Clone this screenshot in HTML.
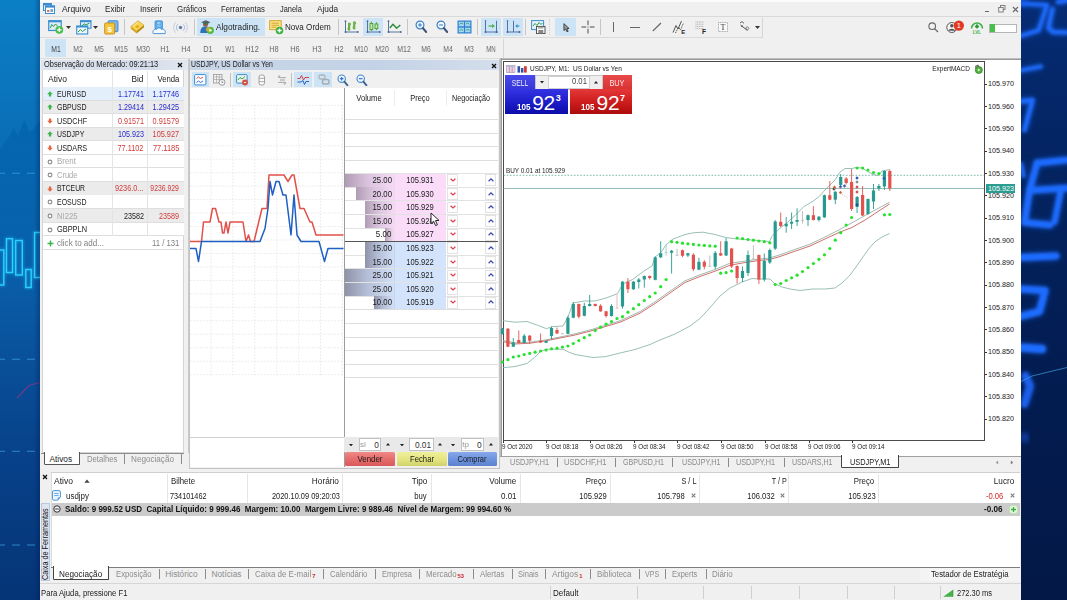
<!DOCTYPE html>
<html><head><meta charset="utf-8"><title>MetaTrader 5</title><style>
html,body{margin:0;padding:0;background:#04275f;}
#pg{position:relative;width:1067px;height:600px;overflow:hidden;font-family:"Liberation Sans",sans-serif;}
.t{position:absolute;white-space:pre;line-height:12px;height:12px;}
.r{position:absolute;box-sizing:border-box;}
</style></head><body><div id="pg">
<svg class="r" style="left:0;top:0" width="1067" height="600" viewBox="0 0 1067 600">
<defs>
<linearGradient id="lg" x1="0" y1="0" x2="0" y2="1">
<stop offset="0" stop-color="#0b7fc6"/><stop offset="0.25" stop-color="#0a6db6"/><stop offset="0.5" stop-color="#0a5aa4"/><stop offset="0.75" stop-color="#07428a"/><stop offset="1" stop-color="#053476"/>
</linearGradient>
<linearGradient id="rg" x1="0" y1="0" x2="0" y2="1">
<stop offset="0" stop-color="#062c74"/><stop offset="0.3" stop-color="#04235f"/><stop offset="0.65" stop-color="#031c50"/><stop offset="1" stop-color="#031846"/>
</linearGradient>
<linearGradient id="mg" x1="0" y1="0" x2="0" y2="1"><stop offset="0" stop-color="#0a5fa9" stop-opacity="0.6"/><stop offset="0.45" stop-color="#0a5fa9" stop-opacity="0.35"/><stop offset="1" stop-color="#0a5fa9" stop-opacity="0"/></linearGradient>
<filter id="b1" x="-20%" y="-20%" width="140%" height="140%"><feGaussianBlur stdDeviation="1.6"/></filter>
<filter id="b2" x="-20%" y="-20%" width="140%" height="140%"><feGaussianBlur stdDeviation="3"/></filter>
<filter id="b0" x="-20%" y="-20%" width="140%" height="140%"><feGaussianBlur stdDeviation="0.5"/></filter>
</defs>
<rect x="0" y="0" width="42" height="600" fill="url(#lg)"/>
<path d="M0,150 L8,138 L14,128 L18,136 L24,120 L30,132 L36,126 L42,118 L42,330 L0,330 Z" fill="url(#mg)" filter="url(#b0)"/>
<g fill="none" stroke="#1fb8f0" stroke-width="3" opacity="0.45" filter="url(#b1)">
<rect x="-3" y="250" width="6.8" height="35"/>
<rect x="6.5" y="238.7" width="6" height="33.8"/>
<rect x="15.7" y="240.5" width="6.6" height="34.5"/>
<rect x="25.8" y="269.5" width="5.4" height="18"/>
<rect x="34.6" y="232.5" width="7" height="45"/>
</g>
<g fill="none" stroke="#2bd0ff" stroke-width="1.4" filter="url(#b0)">
<rect x="-3" y="250" width="6.8" height="35"/>
<rect x="6.5" y="238.7" width="6" height="33.8"/>
<rect x="15.7" y="240.5" width="6.6" height="34.5"/>
<rect x="25.8" y="269.5" width="5.4" height="18"/>
<rect x="34.6" y="232.5" width="7" height="45"/>
</g>
<g stroke="#3c9fe0" stroke-width="1.1" stroke-dasharray="8,7" opacity="0.75">
<line x1="-3" y1="173.3" x2="36" y2="173.3"/><line x1="-3" y1="359.2" x2="36" y2="359.2"/><line x1="-3" y1="451.3" x2="36" y2="451.3"/><line x1="-3" y1="545" x2="36" y2="545"/>
</g>
<path d="M17,398 L29,385.5 L34,384 L40,382.5" fill="none" stroke="#7a3a8a" stroke-width="1.2" opacity="0.9"/>
<linearGradient id="sh" x1="0" y1="0" x2="1" y2="0"><stop offset="0" stop-color="#001040" stop-opacity="0"/><stop offset="1" stop-color="#001040" stop-opacity="0.28"/></linearGradient>
<rect x="34" y="0" width="6" height="600" fill="url(#sh)"/>
<rect x="1020" y="0" width="47" height="600" fill="url(#rg)"/>
<g filter="url(#b2)" opacity="0.55"><g fill="none" stroke="#1f6cff" stroke-linecap="round" stroke-linejoin="round">
<path d="M1020,3.5 L1047,5 L1038.5,30.5 L1020,36" stroke-width="4.2"/>
<path d="M1058,2 L1067,0.5 M1052.5,9 L1048.5,28 L1053,32 L1067,32.5" stroke-width="4.5"/>
<path d="M1020,70.5 L1041,66.5" stroke-width="4.2"/>
<path d="M1020,101.5 L1032.5,100.2 L1024.5,130" stroke-width="4.8"/>
<path d="M1037,163 L1067,160" stroke-width="6.5"/>
<path d="M1037,163 L1029.5,190.5 L1067,188" stroke-width="6.5"/>
<path d="M1029.5,190.5 L1024.5,222.5 L1050,225" stroke-width="6.5"/>
<path d="M1061,190 L1054.5,222" stroke-width="6"/>
<path d="M1021,164 L1023.5,176" stroke-width="4"/>
<path d="M1020,257.5 L1056,256" stroke-width="7"/>
<path d="M1020,289 L1045,290.5 L1039.5,311.5 L1020,316.5" stroke-width="7"/>
<path d="M1020,347.5 L1042,349" stroke-width="8"/>
<path d="M1025.5,376 L1030,386 L1024.5,404" stroke-width="7.5" stroke="#1e5fea"/>
</g></g>
<g filter="url(#b1)"><g fill="none" stroke="#1f6cff" stroke-linecap="round" stroke-linejoin="round">
<path d="M1020,3.5 L1047,5 L1038.5,30.5 L1020,36" stroke-width="4.2"/>
<path d="M1058,2 L1067,0.5 M1052.5,9 L1048.5,28 L1053,32 L1067,32.5" stroke-width="4.5"/>
<path d="M1020,70.5 L1041,66.5" stroke-width="4.2"/>
<path d="M1020,101.5 L1032.5,100.2 L1024.5,130" stroke-width="4.8"/>
<path d="M1037,163 L1067,160" stroke-width="6.5"/>
<path d="M1037,163 L1029.5,190.5 L1067,188" stroke-width="6.5"/>
<path d="M1029.5,190.5 L1024.5,222.5 L1050,225" stroke-width="6.5"/>
<path d="M1061,190 L1054.5,222" stroke-width="6"/>
<path d="M1021,164 L1023.5,176" stroke-width="4"/>
<path d="M1020,257.5 L1056,256" stroke-width="7"/>
<path d="M1020,289 L1045,290.5 L1039.5,311.5 L1020,316.5" stroke-width="7"/>
<path d="M1020,347.5 L1042,349" stroke-width="8"/>
<path d="M1025.5,376 L1030,386 L1024.5,404" stroke-width="7.5" stroke="#1e5fea"/>
</g>
</g>
<g fill="#1c5cf0" filter="url(#b2)"><circle cx="1023" cy="1" r="4"/><circle cx="1024.5" cy="437.5" r="3.5"/></g>
<path d="M1021,381.5 L1032,376 L1067,367.5" fill="none" stroke="#3fa6e6" stroke-width="0.8" opacity="0.85"/>
</svg>
<div class="r" style="left:39.7px;top:0.0px;width:981.8px;height:600.0px;background:#f0f0f0;"></div>
<div class="r" style="left:39.7px;top:0.0px;width:981.8px;height:1.5px;background:#fbfbfb;"></div>
<svg class="r" style="left:43.0px;top:3.0px;" width="12" height="11" viewBox="0 0 12 11"><rect x="0.5" y="0.5" width="8" height="7" fill="#e8f2fb" stroke="#3d8ad0" stroke-width="1"/><rect x="0.5" y="0.5" width="8" height="1.8" fill="#3d8ad0"/><rect x="2.5" y="2.8" width="9" height="7.7" fill="#fff" stroke="#3d8ad0" stroke-width="1"/><rect x="2.5" y="2.8" width="9" height="1.8" fill="#3d8ad0"/><rect x="4" y="7" width="2.5" height="2" fill="#e07a50"/><rect x="7.5" y="6" width="2.5" height="3" fill="#6aa8de"/></svg>
<div class="t" style="top:3.0px;font-size:8.6px;color:#1e1e1e;transform:scaleX(0.981);transform-origin:0 50%;left:61.8px;">Arquivo</div>
<div class="t" style="top:3.0px;font-size:8.6px;color:#1e1e1e;transform:scaleX(0.939);transform-origin:0 50%;left:105.4px;">Exibir</div>
<div class="t" style="top:3.0px;font-size:8.6px;color:#1e1e1e;transform:scaleX(0.929);transform-origin:0 50%;left:140.3px;">Inserir</div>
<div class="t" style="top:3.0px;font-size:8.6px;color:#1e1e1e;transform:scaleX(0.918);transform-origin:0 50%;left:177.0px;">Gráficos</div>
<div class="t" style="top:3.0px;font-size:8.6px;color:#1e1e1e;transform:scaleX(0.899);transform-origin:0 50%;left:221.4px;">Ferramentas</div>
<div class="t" style="top:3.0px;font-size:8.6px;color:#1e1e1e;transform:scaleX(0.860);transform-origin:0 50%;left:280.4px;">Janela</div>
<div class="t" style="top:3.0px;font-size:8.6px;color:#1e1e1e;transform:scaleX(0.964);transform-origin:0 50%;left:317.3px;">Ajuda</div>
<div class="r" style="left:984.5px;top:10.5px;width:4.0px;height:1.0px;background:#666;"></div>
<svg class="r" style="left:997.5px;top:5.0px;" width="8" height="8" viewBox="0 0 8 8"><rect x="2.5" y="0.5" width="4.5" height="4" fill="none" stroke="#777" stroke-width="0.9"/><rect x="0.7" y="2.5" width="4.5" height="4.5" fill="#f0f0f0" stroke="#777" stroke-width="0.9"/></svg>
<svg class="r" style="left:1011.5px;top:5.5px;" width="7" height="7" viewBox="0 0 7 7"><path d="M1,1 L6,6 M6,1 L1,6" stroke="#666" stroke-width="1.1" fill="none"/></svg>
<div class="r" style="left:39.7px;top:16.3px;width:981.8px;height:0.8px;background:#d9d9d9;"></div>
<svg class="r" style="left:47.5px;top:19.5px;" width="18" height="15" viewBox="0 0 18 15"><rect x="0.7" y="0.7" width="12.5" height="9.8" fill="#dcecfa" stroke="#3a8fd0" stroke-width="1.2"/><rect x="0.7" y="0.7" width="12.5" height="1.6" fill="#3a8fd0"/><path d="M2.2,8 L3.8,4.5 L5.5,6.5 L7.5,4 L9.5,6" stroke="#2d9a45" stroke-width="1" fill="none"/><circle cx="11.3" cy="9.8" r="3.9" fill="#48bf4c"/><path d="M11.3,7.6 V12 M9.1,9.8 H13.5" stroke="#fff" stroke-width="1.3"/></svg>
<svg class="r" style="left:65.5px;top:26.0px;" width="5" height="3" viewBox="0 0 5 3"><path d="M0,0 L5,0 L2.5,3 Z" fill="#333"/></svg>
<svg class="r" style="left:75.5px;top:19.5px;" width="16" height="15" viewBox="0 0 16 15"><rect x="4.5" y="0.7" width="10.5" height="7.5" fill="#dcecfa" stroke="#3a8fd0" stroke-width="1.1"/><rect x="4.5" y="0.7" width="10.5" height="1.5" fill="#3a8fd0"/><rect x="0.7" y="6" width="11" height="8" fill="#eef6fd" stroke="#3a8fd0" stroke-width="1.1"/><rect x="0.7" y="6" width="11" height="1.5" fill="#3a8fd0"/><path d="M6,6 L8,3.8 L10,5 L13.5,3" stroke="#2d9a45" stroke-width="1" fill="none"/><path d="M2,12 L4.5,9.6 L6.5,11.5 L10,9" stroke="#2d9a45" stroke-width="1" fill="none"/></svg>
<svg class="r" style="left:93.0px;top:26.0px;" width="5" height="3" viewBox="0 0 5 3"><path d="M0,0 L5,0 L2.5,3 Z" fill="#333"/></svg>
<svg class="r" style="left:103.5px;top:19.5px;" width="15" height="15" viewBox="0 0 15 15"><rect x="4" y="0.7" width="10" height="11" rx="1" fill="#7db7ea" stroke="#3f88cc" stroke-width="0.9"/><rect x="0.7" y="3" width="10" height="11" rx="1" fill="#f6c63c" stroke="#c58a10" stroke-width="0.9"/><text x="5.7" y="11.7" font-size="8" font-family="Liberation Sans, sans-serif" font-weight="bold" fill="#fff" text-anchor="middle">$</text></svg>
<div class="r" style="left:123.5px;top:19.0px;width:1.0px;height:16.0px;background:#c6c6c6;"></div>
<svg class="r" style="left:129.5px;top:19.5px;" width="15" height="14" viewBox="0 0 15 14"><path d="M0.8,6.6 L8,0.8 L14,5.2 L6.6,11.3 Z" fill="#f7d352" stroke="#c8961c" stroke-width="0.6"/><path d="M0.8,6.6 L6.6,11.3 L6.6,13.4 L0.8,8.7 Z" fill="#d9a520"/><path d="M6.6,11.3 L14,5.2 L14,7.3 L6.6,13.4 Z" fill="#b8860e"/><path d="M5.2,6.8 L7.5,5 L9.3,6.4 L7.2,8.2 Z" fill="#e0a818"/><path d="M3,6.2 L8,2.3" stroke="#fdf0b0" stroke-width="0.9"/></svg>
<svg class="r" style="left:151.5px;top:19.5px;" width="15" height="15" viewBox="0 0 15 15"><rect x="3" y="0.8" width="7.5" height="8.5" rx="1" fill="#5cadea" stroke="#3f90d6" stroke-width="0.8"/><path d="M5,3 H8.5 M6.8,1.8 V4.6 M5,6 H8.5" stroke="#bfe0fa" stroke-width="0.8"/><path d="M1.2,13.6 C0,10.5 2.5,8.6 4.4,9.5 C5.2,7.4 8.6,7.4 9.4,9.4 C11.8,8.4 14,10.4 13.2,13.6 Z" fill="#f4f9fe" stroke="#4a98dc" stroke-width="1"/></svg>
<svg class="r" style="left:172.5px;top:20.5px;" width="15" height="13" viewBox="0 0 15 13"><circle cx="7.5" cy="6.5" r="1.7" fill="#5f7fa8"/><path d="M4.8,3.3 A4.5,4.5 0 0 0 4.8,9.7 M10.2,3.3 A4.5,4.5 0 0 1 10.2,9.7" stroke="#9fb4d0" stroke-width="0.9" fill="none"/><path d="M2.8,1.3 A7.3,7.3 0 0 0 2.8,11.7 M12.2,1.3 A7.3,7.3 0 0 1 12.2,11.7" stroke="#bccadc" stroke-width="0.9" fill="none"/></svg>
<div class="r" style="left:193.5px;top:19.0px;width:1.0px;height:16.0px;background:#c6c6c6;"></div>
<div class="r" style="left:197.0px;top:18.3px;width:67.8px;height:17.6px;background:#cde4f7;"></div>
<svg class="r" style="left:199.5px;top:20.0px;" width="14" height="14" viewBox="0 0 14 14"><circle cx="5.5" cy="4.2" r="2.5" fill="#a8584a"/><path d="M0.3,13 C0.3,8 2.5,6.6 5.5,6.6 C8.5,6.6 10.5,8 10.5,13 Z" fill="#2c72c0"/><path d="M1,2.2 L5.8,0.2 L10.6,2.2 L5.8,4 Z" fill="#55606a"/><path d="M3,3 L8.6,3 L8.2,4.6 L3.4,4.6 Z" fill="#3c7a4a"/><circle cx="10.3" cy="10.3" r="3.6" fill="#58b83a"/><circle cx="8" cy="9.3" r="2.2" fill="#d8b02a" opacity="0.8"/><path d="M9.4,8.4 L12.4,10.3 L9.4,12.2 Z" fill="#eaffd8"/></svg>
<div class="t" style="top:21.0px;font-size:8.6px;color:#1e1e1e;transform:scaleX(0.963);transform-origin:0 50%;left:216.0px;">Algotrading.</div>
<svg class="r" style="left:268.5px;top:19.5px;" width="15" height="15" viewBox="0 0 15 15"><rect x="0.7" y="0.7" width="11.5" height="9" fill="#fbe28a" stroke="#d0a020" stroke-width="0.9"/><path d="M2.5,3.2 H10 M2.5,5.3 H10 M2.5,7.3 H7" stroke="#c99a18" stroke-width="0.8"/><circle cx="10.5" cy="10.5" r="3.8" fill="#3cb043"/><path d="M10.5,8.4 V12.6 M8.4,10.5 H12.6" stroke="#fff" stroke-width="1.3"/></svg>
<div class="t" style="top:21.0px;font-size:8.6px;color:#1e1e1e;transform:scaleX(0.940);transform-origin:0 50%;left:284.8px;">Nova Ordem</div>
<div class="r" style="left:337.5px;top:19.0px;width:1.0px;height:16.0px;background:#c6c6c6;"></div>
<svg class="r" style="left:343.5px;top:20.0px;" width="15" height="14" viewBox="0 0 15 14"><path d="M1.5,1 V12 M1.5,12 H14" stroke="#46689a" stroke-width="0.9" fill="none"/><circle cx="1.5" cy="1.2" r="0.9" fill="#46689a"/><circle cx="1.5" cy="12" r="1" fill="#46689a"/><circle cx="13.8" cy="12" r="0.9" fill="#46689a"/><path d="M5.2,2.8 V10.6 M3.7,8.8 H5.2 M5.2,4.2 H6.7 M10.3,1.6 V9.2 M8.8,7.6 H10.3 M10.3,3 H11.8" stroke="#3f8f22" stroke-width="1.9" fill="none"/><path d="M5.2,2.8 V10.6 M3.7,8.8 H5.2 M5.2,4.2 H6.7 M10.3,1.6 V9.2 M8.8,7.6 H10.3 M10.3,3 H11.8" stroke="#7ed048" stroke-width="0.8" fill="none"/></svg>
<div class="r" style="left:363.3px;top:18.3px;width:19.6px;height:17.6px;background:#cde4f7;"></div>
<svg class="r" style="left:365.5px;top:20.0px;" width="15" height="14" viewBox="0 0 15 14"><path d="M1.5,1 V12 M1.5,12 H14" stroke="#46689a" stroke-width="0.9" fill="none"/><circle cx="1.5" cy="1.2" r="0.9" fill="#46689a"/><circle cx="1.5" cy="12" r="1" fill="#46689a"/><circle cx="13.8" cy="12" r="0.9" fill="#46689a"/><rect x="4" y="3.5" width="2.8" height="6.2" fill="#c6e8a8" stroke="#4a9e2a" stroke-width="0.9"/><path d="M5.4,1.6 V3.5 M5.4,9.7 V11" stroke="#4a9e2a" stroke-width="0.9"/><rect x="9" y="4" width="2.8" height="4.6" fill="#c6e8a8" stroke="#4a9e2a" stroke-width="0.9"/><path d="M10.4,2.2 V4 M10.4,8.6 V10.2" stroke="#4a9e2a" stroke-width="0.9"/></svg>
<svg class="r" style="left:387.0px;top:20.0px;" width="15" height="14" viewBox="0 0 15 14"><path d="M1.5,1 V12 M1.5,12 H14" stroke="#46689a" stroke-width="0.9" fill="none"/><circle cx="1.5" cy="1.2" r="0.9" fill="#46689a"/><circle cx="1.5" cy="12" r="1" fill="#46689a"/><circle cx="13.8" cy="12" r="0.9" fill="#46689a"/><path d="M2.8,8 L6,4.2 L9.6,8.2 L13.3,5" stroke="#2e8a3a" stroke-width="1.4" fill="none" stroke-linejoin="round"/></svg>
<div class="r" style="left:407.3px;top:19.0px;width:1.0px;height:16.0px;background:#c6c6c6;"></div>
<svg class="r" style="left:414.5px;top:19.6px;" width="13" height="14" viewBox="0 0 13 14"><circle cx="5" cy="5" r="3.9" fill="#f3f9ff" stroke="#3f7fc4" stroke-width="1.2"/><path d="M7.8,8 L11.2,12" stroke="#3f5578" stroke-width="2" stroke-linecap="round"/><path d="M3,5 H7" stroke="#3f88cc" stroke-width="1.1"/><path d="M5,3 V7" stroke="#3f88cc" stroke-width="1.1"/></svg>
<svg class="r" style="left:436.0px;top:19.6px;" width="13" height="14" viewBox="0 0 13 14"><circle cx="5" cy="5" r="3.9" fill="#f3f9ff" stroke="#3f7fc4" stroke-width="1.2"/><path d="M7.8,8 L11.2,12" stroke="#3f5578" stroke-width="2" stroke-linecap="round"/><path d="M3,5 H7" stroke="#3f88cc" stroke-width="1.1"/></svg>
<svg class="r" style="left:457.0px;top:20.0px;" width="15" height="14" viewBox="0 0 15 14"><rect x="0.5" y="0.5" width="14" height="13" fill="#2f7fd0"/><rect x="1.7" y="1.7" width="5.2" height="4.6" fill="#a6d6f6"/><rect x="8.1" y="1.7" width="5.2" height="4.6" fill="#a6d6f6"/><rect x="1.7" y="7.7" width="5.2" height="4.6" fill="#a6d6f6"/><rect x="8.1" y="7.7" width="5.2" height="4.6" fill="#a6d6f6"/><path d="M2.5,4.5 L4,3 L6,4 M9,4 L10.5,3 L12.5,4.3 M2.5,10.5 L4.5,9.3 L6,10.5 M9,10 L11,9.5 L12.5,10.5" stroke="#2d9a45" stroke-width="0.8" fill="none"/></svg>
<div class="r" style="left:477.3px;top:19.0px;width:1.0px;height:16.0px;background:#c6c6c6;"></div>
<div class="r" style="left:480.8px;top:18.3px;width:20.4px;height:17.6px;background:#cde4f7;"></div>
<svg class="r" style="left:483.5px;top:20.0px;" width="15" height="14" viewBox="0 0 15 14"><path d="M1.5,0.8 V12 M12.5,0.8 V12 M1.5,12 H14" stroke="#46689a" stroke-width="0.9" fill="none"/><path d="M4.5,6 H10" stroke="#4cb04c" stroke-width="1.2"/><path d="M8.2,3.7 L10.8,6 L8.2,8.3 Z" fill="#4cb04c"/><circle cx="1.5" cy="12" r="1" fill="#46689a"/><circle cx="12.5" cy="12" r="1" fill="#46689a"/><circle cx="1.5" cy="1" r="0.8" fill="#46689a"/></svg>
<div class="r" style="left:502.6px;top:18.3px;width:20.8px;height:17.6px;background:#cde4f7;"></div>
<svg class="r" style="left:505.5px;top:20.0px;" width="15" height="14" viewBox="0 0 15 14"><path d="M1.5,0.8 V12 M7.5,0.8 V12 M1.5,12 H14" stroke="#46689a" stroke-width="0.9" fill="none"/><path d="M10,6 H13.5" stroke="#3a8fd0" stroke-width="1.1"/><path d="M11.5,3.9 L9.3,6 L11.5,8.1 Z" fill="#3a8fd0"/><circle cx="1.5" cy="12" r="1" fill="#46689a"/><circle cx="13.5" cy="12" r="1" fill="#46689a"/><circle cx="1.5" cy="1" r="0.8" fill="#46689a"/></svg>
<div class="r" style="left:524.6px;top:19.0px;width:1.0px;height:16.0px;background:#c6c6c6;"></div>
<svg class="r" style="left:531.0px;top:20.0px;" width="15" height="14" viewBox="0 0 15 14"><rect x="0.6" y="0.6" width="12" height="9" fill="#e6f2fc" stroke="#3a8fd0" stroke-width="1"/><path d="M2,6 L4,3.5 L6,5.5 L8,2.5 L10,4.5 L11.5,3" stroke="#2d9a45" stroke-width="1" fill="none"/><rect x="5.5" y="6.5" width="8.5" height="7" fill="#fff" stroke="#555" stroke-width="1"/><rect x="7.3" y="10" width="5" height="3.5" fill="#888"/><rect x="7" y="6.8" width="5.5" height="1.8" fill="#aaa"/></svg>
<div class="r" style="left:549.3px;top:19.0px;width:1.0px;height:16.0px;background:transparent;border-left:1px dotted #d2d2d2;"></div>
<div class="r" style="left:555.0px;top:18.3px;width:21.4px;height:17.6px;background:#cde4f7;"></div>
<svg class="r" style="left:563.0px;top:22.5px;" width="7" height="9.5" viewBox="0 0 8 11"><path d="M1,0.7 L1,8.8 L3,7 L4.6,10.3 L5.9,9.7 L4.4,6.5 L7,6.3 Z" fill="#9a9a9a" stroke="#2a2a2a" stroke-width="0.9"/></svg>
<svg class="r" style="left:580.5px;top:19.5px;" width="14" height="14" viewBox="0 0 14 14"><path d="M7,0.5 V5.2 M7,8.8 V13.5 M0.5,7 H5.2 M8.8,7 H13.5" stroke="#4a4a4a" stroke-width="1"/><circle cx="7" cy="7" r="0.6" fill="#4a4a4a"/></svg>
<div class="r" style="left:600.2px;top:19.0px;width:1.0px;height:16.0px;background:#c6c6c6;"></div>
<div class="r" style="left:612.6px;top:22.0px;width:1.0px;height:10.0px;background:#666;"></div>
<div class="r" style="left:630.0px;top:26.6px;width:9.5px;height:1.0px;background:#666;"></div>
<svg class="r" style="left:651.5px;top:22.0px;" width="10" height="10" viewBox="0 0 10 10"><path d="M0.8,9 L9,1" stroke="#666" stroke-width="1.1"/></svg>
<svg class="r" style="left:671.5px;top:20.0px;" width="15" height="14" viewBox="0 0 15 14"><path d="M1,12.5 L4,5.5 L6,9 L9.5,1" stroke="#555" stroke-width="1" fill="none"/><path d="M3.5,13 L6.5,7 L8.5,10 L11.5,3" stroke="#555" stroke-width="1" fill="none" stroke-dasharray="1.2,0.8"/><text x="9.3" y="13.6" font-size="6" font-weight="bold" font-family="Liberation Sans, sans-serif" fill="#222">E</text></svg>
<svg class="r" style="left:695.0px;top:20.5px;" width="13" height="14" viewBox="0 0 13 14"><path d="M0.5,1 H8.5 M0.5,3.2 H8.5 M0.5,5.4 H8.5 M0.5,7.6 H8.5" stroke="#999" stroke-width="0.8" stroke-dasharray="1,0.7"/><text x="7" y="13" font-size="6.5" font-weight="bold" font-family="Liberation Sans, sans-serif" fill="#222">F</text></svg>
<svg class="r" style="left:716.5px;top:21.0px;" width="12" height="12" viewBox="0 0 12 12"><rect x="1.5" y="1.5" width="9" height="9" fill="#fafafa" stroke="#888" stroke-width="0.7" stroke-dasharray="1,0.6"/><text x="6" y="9.3" font-size="8" font-family="Liberation Serif, serif" fill="#333" text-anchor="middle">T</text></svg>
<svg class="r" style="left:738.5px;top:21.0px;" width="11" height="11" viewBox="0 0 11 11"><path d="M1,2 L3,0.6 L5,2.3" stroke="#555" stroke-width="0.9" fill="none"/><path d="M1.5,4 L8.5,9.5" stroke="#555" stroke-width="1"/><path d="M6.5,7 L8.3,5.6 L10,7.3 L8.3,9 Z" stroke="#555" stroke-width="0.8" fill="none"/><path d="M2,6 L4,4.4" stroke="#555" stroke-width="0.8"/></svg>
<svg class="r" style="left:754.5px;top:26.0px;" width="5" height="3" viewBox="0 0 5 3"><path d="M0,0 L5,0 L2.5,3 Z" fill="#333"/></svg>
<div class="r" style="left:762.3px;top:17.5px;width:1.0px;height:19.5px;background:#d6d6d6;"></div>
<div class="r" style="left:39.7px;top:37.0px;width:723.0px;height:0.8px;background:#dadada;"></div>
<svg class="r" style="left:927.5px;top:21.5px;" width="11" height="11" viewBox="0 0 11 11"><circle cx="4.2" cy="4.2" r="3.3" fill="none" stroke="#666" stroke-width="1.1"/><path d="M6.6,6.6 L10,10" stroke="#666" stroke-width="1.3"/></svg>
<svg class="r" style="left:945.5px;top:20.0px;" width="19" height="14" viewBox="0 0 19 14"><circle cx="5.8" cy="7.5" r="5" fill="#f4f4f4" stroke="#555" stroke-width="1"/><circle cx="5.8" cy="5.8" r="1.7" fill="#555"/><path d="M2.3,10.8 C3,8 8.6,8 9.3,10.8" fill="#555"/><circle cx="12.8" cy="5.6" r="5.2" fill="#e03a22"/><text x="12.8" y="8.3" font-size="7.5" font-family="Liberation Sans, sans-serif" fill="#fff" text-anchor="middle">1</text></svg>
<svg class="r" style="left:969.5px;top:20.0px;" width="14" height="14" viewBox="0 0 14 14"><path d="M1.5,8.5 A5.5,5.5 0 0 1 12.5,8.5" fill="none" stroke="#3cb043" stroke-width="1.6"/><path d="M7,3.8 L9.3,6.8 L7,8.8 L4.7,6.8 Z" fill="#2f9a3a"/><text x="7" y="13.6" font-size="4.6" font-weight="bold" font-family="Liberation Sans, sans-serif" fill="#3cb043" text-anchor="middle">LVL</text></svg>
<div class="r" style="left:988.8px;top:23.5px;width:28.5px;height:9.0px;background:#fdfdfd;border:1px solid #b5b5b5;"></div>
<div class="r" style="left:989.6px;top:24.3px;width:5.0px;height:7.4px;background:#48c04a;"></div>
<div class="r" style="left:45.4px;top:39.0px;width:20.8px;height:17.6px;background:#cde4f7;"></div>
<div class="t" style="top:42.5px;font-size:8.5px;color:#444;transform:scaleX(0.805);transform-origin:50% 50%;left:-44.2px;width:200px;text-align:center;">M1</div>
<div class="t" style="top:42.5px;font-size:8.5px;color:#6a6a6a;transform:scaleX(0.805);transform-origin:50% 50%;left:-22.4px;width:200px;text-align:center;">M2</div>
<div class="t" style="top:42.5px;font-size:8.5px;color:#6a6a6a;transform:scaleX(0.805);transform-origin:50% 50%;left:-0.7px;width:200px;text-align:center;">M5</div>
<div class="t" style="top:42.5px;font-size:8.5px;color:#6a6a6a;transform:scaleX(0.817);transform-origin:50% 50%;left:21.1px;width:200px;text-align:center;">M15</div>
<div class="t" style="top:42.5px;font-size:8.5px;color:#6a6a6a;transform:scaleX(0.817);transform-origin:50% 50%;left:42.9px;width:200px;text-align:center;">M30</div>
<div class="t" style="top:42.5px;font-size:8.5px;color:#6a6a6a;transform:scaleX(0.874);transform-origin:50% 50%;left:64.6px;width:200px;text-align:center;">H1</div>
<div class="t" style="top:42.5px;font-size:8.5px;color:#6a6a6a;transform:scaleX(0.874);transform-origin:50% 50%;left:86.4px;width:200px;text-align:center;">H4</div>
<div class="t" style="top:42.5px;font-size:8.5px;color:#6a6a6a;transform:scaleX(0.874);transform-origin:50% 50%;left:108.2px;width:200px;text-align:center;">D1</div>
<div class="t" style="top:42.5px;font-size:8.5px;color:#6a6a6a;transform:scaleX(0.745);transform-origin:50% 50%;left:130.0px;width:200px;text-align:center;">W1</div>
<div class="t" style="top:42.5px;font-size:8.5px;color:#6a6a6a;transform:scaleX(0.866);transform-origin:50% 50%;left:151.7px;width:200px;text-align:center;">H12</div>
<div class="t" style="top:42.5px;font-size:8.5px;color:#6a6a6a;transform:scaleX(0.874);transform-origin:50% 50%;left:173.5px;width:200px;text-align:center;">H8</div>
<div class="t" style="top:42.5px;font-size:8.5px;color:#6a6a6a;transform:scaleX(0.874);transform-origin:50% 50%;left:195.3px;width:200px;text-align:center;">H6</div>
<div class="t" style="top:42.5px;font-size:8.5px;color:#6a6a6a;transform:scaleX(0.874);transform-origin:50% 50%;left:217.0px;width:200px;text-align:center;">H3</div>
<div class="t" style="top:42.5px;font-size:8.5px;color:#6a6a6a;transform:scaleX(0.874);transform-origin:50% 50%;left:238.8px;width:200px;text-align:center;">H2</div>
<div class="t" style="top:42.5px;font-size:8.5px;color:#6a6a6a;transform:scaleX(0.817);transform-origin:50% 50%;left:260.6px;width:200px;text-align:center;">M10</div>
<div class="t" style="top:42.5px;font-size:8.5px;color:#6a6a6a;transform:scaleX(0.817);transform-origin:50% 50%;left:282.4px;width:200px;text-align:center;">M20</div>
<div class="t" style="top:42.5px;font-size:8.5px;color:#6a6a6a;transform:scaleX(0.817);transform-origin:50% 50%;left:304.1px;width:200px;text-align:center;">M12</div>
<div class="t" style="top:42.5px;font-size:8.5px;color:#6a6a6a;transform:scaleX(0.805);transform-origin:50% 50%;left:325.9px;width:200px;text-align:center;">M6</div>
<div class="t" style="top:42.5px;font-size:8.5px;color:#6a6a6a;transform:scaleX(0.805);transform-origin:50% 50%;left:347.7px;width:200px;text-align:center;">M4</div>
<div class="t" style="top:42.5px;font-size:8.5px;color:#6a6a6a;transform:scaleX(0.805);transform-origin:50% 50%;left:369.4px;width:200px;text-align:center;">M3</div>
<div class="t" style="top:42.5px;font-size:8.5px;color:#6a6a6a;transform:scaleX(0.719);transform-origin:50% 50%;left:391.2px;width:200px;text-align:center;">MN</div>
<div class="r" style="left:502.8px;top:38.5px;width:1.0px;height:19.0px;background:#d6d6d6;"></div>
<div class="r" style="left:39.7px;top:57.6px;width:463.0px;height:0.8px;background:#dcdcdc;"></div>
<div class="r" style="left:40.5px;top:58.5px;width:148.5px;height:410.5px;background:#f0f0f0;"></div>
<div class="r" style="left:41.0px;top:59.6px;width:147.0px;height:10.4px;background:linear-gradient(90deg,#dfe5ee 0%,#d3dcea 70%,#e3e8f0 100%);"></div>
<div class="t" style="top:59.0px;font-size:8.2px;color:#1a1a1a;transform:scaleX(0.906);transform-origin:0 50%;left:43.8px;">Observação do Mercado: 09:21:13</div>
<svg class="r" style="left:176.5px;top:61.8px;" width="6" height="6" viewBox="0 0 6 6"><path d="M1,1 L5,5 M5,1 L1,5" stroke="#111" stroke-width="1.3"/></svg>
<div class="r" style="left:42.3px;top:70.3px;width:142.0px;height:382.5px;background:#fff;border:1px solid #d4d4d4;border-top:none;"></div>
<div class="r" style="left:184.3px;top:70.3px;width:4.2px;height:382.5px;background:#f0f0f0;"></div>
<div class="r" style="left:188.3px;top:58.5px;width:0.8px;height:410.5px;background:#c9c9c9;"></div>
<div class="t" style="top:73.0px;font-size:8.6px;color:#1a1a1a;transform:scaleX(0.994);transform-origin:0 50%;left:47.5px;">Ativo</div>
<div class="t" style="top:73.0px;font-size:8.6px;color:#1a1a1a;transform:scaleX(0.965);transform-origin:100% 50%;right:923.7px;">Bid</div>
<div class="t" style="top:73.0px;font-size:8.6px;color:#1a1a1a;transform:scaleX(0.902);transform-origin:100% 50%;right:888.0px;">Venda</div>
<div class="r" style="left:43.0px;top:86.6px;width:141.0px;height:0.7px;background:#e2e2e2;"></div>
<div class="r" style="left:43.0px;top:87.0px;width:141.0px;height:13.6px;background:#e3effb;"></div>
<div class="r" style="left:43.0px;top:99.6px;width:141.0px;height:0.9px;background:#dedede;"></div>
<svg class="r" style="left:47.0px;top:90.7px;" width="6" height="6" viewBox="0 0 7 7"><path d="M3.5,0.3 L6.7,3.7 L4.8,3.7 L4.8,6.5 L2.2,6.5 L2.2,3.7 L0.3,3.7 Z" fill="#3bb54a"/></svg>
<div class="t" style="top:87.6px;font-size:8.6px;color:#1a1a1a;transform:scaleX(0.804);transform-origin:0 50%;left:57.0px;">EURUSD</div>
<div class="t" style="top:87.6px;font-size:8.6px;color:#2a2acc;transform:scaleX(0.836);transform-origin:100% 50%;right:923.4px;">1.17741</div>
<div class="t" style="top:87.6px;font-size:8.6px;color:#2a2acc;transform:scaleX(0.853);transform-origin:100% 50%;right:887.8px;">1.17746</div>
<div class="r" style="left:43.0px;top:100.5px;width:141.0px;height:13.6px;background:#ebebeb;"></div>
<div class="r" style="left:43.0px;top:113.2px;width:141.0px;height:0.9px;background:#dedede;"></div>
<svg class="r" style="left:47.0px;top:104.2px;" width="6" height="6" viewBox="0 0 7 7"><path d="M3.5,0.3 L6.7,3.7 L4.8,3.7 L4.8,6.5 L2.2,6.5 L2.2,3.7 L0.3,3.7 Z" fill="#3bb54a"/></svg>
<div class="t" style="top:101.1px;font-size:8.6px;color:#1a1a1a;transform:scaleX(0.812);transform-origin:0 50%;left:57.0px;">GBPUSD</div>
<div class="t" style="top:101.1px;font-size:8.6px;color:#2a2acc;transform:scaleX(0.836);transform-origin:100% 50%;right:923.4px;">1.29414</div>
<div class="t" style="top:101.1px;font-size:8.6px;color:#2a2acc;transform:scaleX(0.853);transform-origin:100% 50%;right:887.8px;">1.29425</div>
<div class="r" style="left:43.0px;top:114.1px;width:141.0px;height:13.6px;background:#ffffff;"></div>
<div class="r" style="left:43.0px;top:126.7px;width:141.0px;height:0.9px;background:#dedede;"></div>
<svg class="r" style="left:47.0px;top:117.8px;" width="6" height="6" viewBox="0 0 7 7"><path d="M3.5,6.7 L6.7,3.3 L4.8,3.3 L4.8,0.5 L2.2,0.5 L2.2,3.3 L0.3,3.3 Z" fill="#e8643c"/></svg>
<div class="t" style="top:114.7px;font-size:8.6px;color:#1a1a1a;transform:scaleX(0.846);transform-origin:0 50%;left:57.0px;">USDCHF</div>
<div class="t" style="top:114.7px;font-size:8.6px;color:#d23b3b;transform:scaleX(0.836);transform-origin:100% 50%;right:923.4px;">0.91571</div>
<div class="t" style="top:114.7px;font-size:8.6px;color:#d23b3b;transform:scaleX(0.853);transform-origin:100% 50%;right:887.8px;">0.91579</div>
<div class="r" style="left:43.0px;top:127.7px;width:141.0px;height:13.6px;background:#ebebeb;"></div>
<div class="r" style="left:43.0px;top:140.3px;width:141.0px;height:0.9px;background:#dedede;"></div>
<svg class="r" style="left:47.0px;top:131.3px;" width="6" height="6" viewBox="0 0 7 7"><path d="M3.5,0.3 L6.7,3.7 L4.8,3.7 L4.8,6.5 L2.2,6.5 L2.2,3.7 L0.3,3.7 Z" fill="#3bb54a"/></svg>
<div class="t" style="top:128.2px;font-size:8.6px;color:#1a1a1a;transform:scaleX(0.805);transform-origin:0 50%;left:57.0px;">USDJPY</div>
<div class="t" style="top:128.2px;font-size:8.6px;color:#2a2acc;transform:scaleX(0.836);transform-origin:100% 50%;right:923.4px;">105.923</div>
<div class="t" style="top:128.2px;font-size:8.6px;color:#d23b3b;transform:scaleX(0.853);transform-origin:100% 50%;right:887.8px;">105.927</div>
<div class="r" style="left:43.0px;top:141.2px;width:141.0px;height:13.6px;background:#ffffff;"></div>
<div class="r" style="left:43.0px;top:153.8px;width:141.0px;height:0.9px;background:#dedede;"></div>
<svg class="r" style="left:47.0px;top:144.9px;" width="6" height="6" viewBox="0 0 7 7"><path d="M3.5,6.7 L6.7,3.3 L4.8,3.3 L4.8,0.5 L2.2,0.5 L2.2,3.3 L0.3,3.3 Z" fill="#e8643c"/></svg>
<div class="t" style="top:141.8px;font-size:8.6px;color:#1a1a1a;transform:scaleX(0.843);transform-origin:0 50%;left:57.0px;">USDARS</div>
<div class="t" style="top:141.8px;font-size:8.6px;color:#d23b3b;transform:scaleX(0.854);transform-origin:100% 50%;right:923.4px;">77.1102</div>
<div class="t" style="top:141.8px;font-size:8.6px;color:#d23b3b;transform:scaleX(0.870);transform-origin:100% 50%;right:887.8px;">77.1185</div>
<div class="r" style="left:43.0px;top:154.8px;width:141.0px;height:13.6px;background:#ffffff;"></div>
<div class="r" style="left:43.0px;top:167.4px;width:141.0px;height:0.9px;background:#dedede;"></div>
<svg class="r" style="left:46.8px;top:158.7px;" width="6" height="6" viewBox="0 0 6 6"><circle cx="3" cy="3" r="1.9" fill="#fff" stroke="#8a8a8a" stroke-width="1.1"/></svg>
<div class="t" style="top:155.3px;font-size:8.6px;color:#a8a8a8;transform:scaleX(0.924);transform-origin:0 50%;left:57.0px;">Brent</div>
<div class="r" style="left:43.0px;top:168.3px;width:141.0px;height:13.6px;background:#ffffff;"></div>
<div class="r" style="left:43.0px;top:181.0px;width:141.0px;height:0.9px;background:#dedede;"></div>
<svg class="r" style="left:46.8px;top:172.3px;" width="6" height="6" viewBox="0 0 6 6"><circle cx="3" cy="3" r="1.9" fill="#fff" stroke="#8a8a8a" stroke-width="1.1"/></svg>
<div class="t" style="top:168.9px;font-size:8.6px;color:#a8a8a8;transform:scaleX(0.875);transform-origin:0 50%;left:57.0px;">Crude</div>
<div class="r" style="left:43.0px;top:181.9px;width:141.0px;height:13.6px;background:#ebebeb;"></div>
<div class="r" style="left:43.0px;top:194.5px;width:141.0px;height:0.9px;background:#dedede;"></div>
<svg class="r" style="left:47.0px;top:185.5px;" width="6" height="6" viewBox="0 0 7 7"><path d="M3.5,6.7 L6.7,3.3 L4.8,3.3 L4.8,0.5 L2.2,0.5 L2.2,3.3 L0.3,3.3 Z" fill="#e8643c"/></svg>
<div class="t" style="top:182.4px;font-size:8.6px;color:#1a1a1a;transform:scaleX(0.792);transform-origin:0 50%;left:57.0px;">BTCEUR</div>
<div class="t" style="top:182.4px;font-size:8.6px;color:#d23b3b;transform:scaleX(0.852);transform-origin:100% 50%;right:923.4px;">9236.0...</div>
<div class="t" style="top:182.4px;font-size:8.6px;color:#d23b3b;transform:scaleX(0.795);transform-origin:100% 50%;right:887.8px;">9236.929</div>
<div class="r" style="left:43.0px;top:195.4px;width:141.0px;height:13.6px;background:#ffffff;"></div>
<div class="r" style="left:43.0px;top:208.1px;width:141.0px;height:0.9px;background:#dedede;"></div>
<svg class="r" style="left:46.8px;top:199.4px;" width="6" height="6" viewBox="0 0 6 6"><circle cx="3" cy="3" r="1.9" fill="#fff" stroke="#8a8a8a" stroke-width="1.1"/></svg>
<div class="t" style="top:196.0px;font-size:8.6px;color:#1a1a1a;transform:scaleX(0.812);transform-origin:0 50%;left:57.0px;">EOSUSD</div>
<div class="r" style="left:43.0px;top:208.9px;width:141.0px;height:13.6px;background:#ebebeb;"></div>
<div class="r" style="left:43.0px;top:221.6px;width:141.0px;height:0.9px;background:#dedede;"></div>
<svg class="r" style="left:46.8px;top:212.9px;" width="6" height="6" viewBox="0 0 6 6"><circle cx="3" cy="3" r="1.9" fill="#fff" stroke="#8a8a8a" stroke-width="1.1"/></svg>
<div class="t" style="top:209.5px;font-size:8.6px;color:#a8a8a8;transform:scaleX(0.893);transform-origin:0 50%;left:57.0px;">NI225</div>
<div class="t" style="top:209.5px;font-size:8.6px;color:#222;transform:scaleX(0.836);transform-origin:100% 50%;right:923.4px;">23582</div>
<div class="t" style="top:209.5px;font-size:8.6px;color:#d23b3b;transform:scaleX(0.836);transform-origin:100% 50%;right:887.8px;">23589</div>
<div class="r" style="left:43.0px;top:222.5px;width:141.0px;height:13.6px;background:#ffffff;"></div>
<div class="r" style="left:43.0px;top:235.2px;width:141.0px;height:0.9px;background:#dedede;"></div>
<svg class="r" style="left:46.8px;top:226.5px;" width="6" height="6" viewBox="0 0 6 6"><circle cx="3" cy="3" r="1.9" fill="#fff" stroke="#8a8a8a" stroke-width="1.1"/></svg>
<div class="t" style="top:223.1px;font-size:8.6px;color:#1a1a1a;transform:scaleX(0.860);transform-origin:0 50%;left:57.0px;">GBPPLN</div>
<svg class="r" style="left:46.5px;top:239.5px;" width="7" height="7" viewBox="0 0 7 7"><path d="M3.5,0.5 V6.5 M0.5,3.5 H6.5" stroke="#3bb54a" stroke-width="1.5"/></svg>
<div class="t" style="top:236.8px;font-size:8.6px;color:#808080;transform:scaleX(0.937);transform-origin:0 50%;left:57.0px;">click to add...</div>
<div class="t" style="top:236.8px;font-size:8.6px;color:#808080;transform:scaleX(0.903);transform-origin:100% 50%;right:887.8px;">11 / 131</div>
<div class="r" style="left:43.0px;top:249.0px;width:141.0px;height:0.9px;background:#dedede;"></div>
<div class="r" style="left:112.3px;top:70.5px;width:0.7px;height:165.5px;background:#e4e4e4;"></div>
<div class="r" style="left:147.0px;top:70.5px;width:0.7px;height:165.5px;background:#e4e4e4;"></div>
<div class="r" style="left:41.0px;top:452.8px;width:147.5px;height:16.0px;background:#f0f0f0;"></div>
<div class="r" style="left:41.0px;top:452.5px;width:142.5px;height:0.9px;background:#8e8e8e;"></div>
<div class="r" style="left:43.5px;top:452.0px;width:36.0px;height:13.2px;background:#fff;border:1px solid #555;border-top:none;border-radius:0 0 1.5px 1.5px;"></div>
<div class="t" style="top:452.8px;font-size:8.3px;color:#1a1a1a;left:49.5px;">Ativos</div>
<div class="t" style="top:452.8px;font-size:8.3px;color:#8c8c8c;transform:scaleX(0.931);transform-origin:0 50%;left:86.5px;">Detalhes</div>
<div class="r" style="left:124.0px;top:454.3px;width:0.8px;height:9.5px;background:#8c8c8c;"></div>
<div class="t" style="top:452.8px;font-size:8.3px;color:#8c8c8c;transform:scaleX(0.981);transform-origin:0 50%;left:131.0px;">Negociação</div>
<div class="r" style="left:181.0px;top:454.3px;width:0.8px;height:9.5px;background:#8c8c8c;"></div>
<div class="r" style="left:189.2px;top:58.5px;width:310.5px;height:410.5px;background:#f0f0f0;border:1px solid #c4c4c4;border-top:none;"></div>
<div class="r" style="left:190.0px;top:59.8px;width:308.5px;height:10.4px;background:linear-gradient(90deg,#c9d6e8 0%,#c3d2e6 60%,#d4deec 100%);"></div>
<div class="t" style="top:59.2px;font-size:8.2px;color:#1a1a1a;transform:scaleX(0.842);transform-origin:0 50%;left:191.2px;">USDJPY, US Dollar vs Yen</div>
<svg class="r" style="left:490.5px;top:62.5px;" width="6" height="6" viewBox="0 0 6 6"><path d="M1,1 L5,5 M5,1 L1,5" stroke="#111" stroke-width="1.3"/></svg>
<div class="r" style="left:190.0px;top:70.2px;width:308.5px;height:18.0px;background:#f0f0f0;"></div>
<div class="r" style="left:191.5px;top:72.0px;width:17.5px;height:15.0px;background:#cde4f7;"></div>
<svg class="r" style="left:193.8px;top:73.5px;" width="13" height="12" viewBox="0 0 13 12"><rect x="0.6" y="0.6" width="11.3" height="10.3" rx="1" fill="#fafdff" stroke="#3a8fd0" stroke-width="1"/><path d="M2.5,4.5 L4.5,3 L6.5,4.5 L9,3.2" stroke="#d04040" stroke-width="0.9" fill="none"/><path d="M2.5,8.5 L4.5,7 L6.5,8.5 L9,7" stroke="#2a62c0" stroke-width="0.9" fill="none"/></svg>
<svg class="r" style="left:213.0px;top:73.5px;" width="13" height="12" viewBox="0 0 13 12"><rect x="0.5" y="0.5" width="8.5" height="8.5" fill="#f4f4f4" stroke="#999" stroke-width="0.8"/><path d="M0.5,3 H9 M0.5,5.5 H9 M3.5,0.5 V9 M6.3,0.5 V9" stroke="#999" stroke-width="0.6"/><circle cx="9" cy="8.3" r="3" fill="#f6f6f6" stroke="#888" stroke-width="0.8"/><path d="M9,6.8 V8.5 H10.3" stroke="#777" stroke-width="0.7" fill="none"/></svg>
<div class="r" style="left:229.8px;top:72.5px;width:1.0px;height:14.0px;background:#c0c0c0;"></div>
<div class="r" style="left:233.2px;top:72.0px;width:17.6px;height:15.0px;background:#cde4f7;"></div>
<svg class="r" style="left:236.0px;top:73.5px;" width="13" height="12" viewBox="0 0 13 12"><rect x="0.6" y="0.6" width="10.5" height="8.5" rx="1" fill="#eaf5ea" stroke="#3a8fd0" stroke-width="1"/><path d="M2,6 L4,3.5 L6,5 L9,2.5" stroke="#2d9a45" stroke-width="0.9" fill="none"/><circle cx="9" cy="8.5" r="3" fill="#d85040"/><path d="M7.8,8.5 H10.2" stroke="#fff" stroke-width="0.9"/></svg>
<svg class="r" style="left:258.0px;top:73.5px;" width="8" height="12" viewBox="0 0 8 12"><rect x="1" y="1" width="5.5" height="10" rx="2" fill="#fafafa" stroke="#999" stroke-width="0.9"/><path d="M1,4.3 H6.5 M1,7.6 H6.5" stroke="#999" stroke-width="0.8"/></svg>
<svg class="r" style="left:276.0px;top:73.5px;" width="12" height="12" viewBox="0 0 12 12"><path d="M2,3.5 H10 M2,3.5 L4,1.5 M2,8.5 H10 M10,8.5 L8,10.5" stroke="#b0b0b0" stroke-width="1.2" fill="none"/><rect x="4" y="4.7" width="5" height="2.6" fill="#c8c8c8"/></svg>
<div class="r" style="left:290.8px;top:72.5px;width:1.0px;height:14.0px;background:#c0c0c0;"></div>
<div class="r" style="left:294.2px;top:72.0px;width:17.6px;height:15.0px;background:#cde4f7;"></div>
<svg class="r" style="left:297.0px;top:73.5px;" width="13" height="12" viewBox="0 0 13 12"><path d="M0.5,4.5 L3,4.5 L4.5,1.5 L6.5,6 L8,3.5 L12,3.5" stroke="#d04040" stroke-width="1" fill="none"/><path d="M0.5,8 L4,8 L6,6.5 L7.5,10.5 L9,7.5 L12,7.5" stroke="#2a62c0" stroke-width="1" fill="none"/></svg>
<div class="r" style="left:314.4px;top:72.0px;width:17.6px;height:15.0px;background:#cde4f7;"></div>
<svg class="r" style="left:317.5px;top:74.0px;" width="12" height="11" viewBox="0 0 12 11"><rect x="1" y="1" width="6" height="4" rx="1.5" fill="none" stroke="#b0b4ba" stroke-width="1.3"/><rect x="4.5" y="5.5" width="6.5" height="4.5" rx="1.8" fill="none" stroke="#a8acb2" stroke-width="1.5"/></svg>
<svg class="r" style="left:336.5px;top:73.8px;" width="12" height="12" viewBox="0 0 12 12"><circle cx="4.7" cy="4.7" r="3.7" fill="#eef6ff" stroke="#3f88cc" stroke-width="1.1"/><path d="M7.4,7.6 L10.5,11.3" stroke="#3a5f94" stroke-width="1.8" stroke-linecap="round"/><path d="M2.9,4.7 H6.5" stroke="#2a62c0" stroke-width="1.1"/><path d="M4.7,2.9 V6.5" stroke="#2a62c0" stroke-width="1.1"/></svg>
<svg class="r" style="left:356.0px;top:73.8px;" width="12" height="12" viewBox="0 0 12 12"><circle cx="4.7" cy="4.7" r="3.7" fill="#eef6ff" stroke="#3f88cc" stroke-width="1.1"/><path d="M7.4,7.6 L10.5,11.3" stroke="#3a5f94" stroke-width="1.8" stroke-linecap="round"/><path d="M2.9,4.7 H6.5" stroke="#2a62c0" stroke-width="1.1"/></svg>
<div class="r" style="left:190.0px;top:88.2px;width:154.6px;height:379.3px;background:#fff;border-right:1px solid #a8a8a8;"></div>
<div class="r" style="left:190.0px;top:436.6px;width:153.5px;height:0.8px;background:#d0d0d0;"></div>
<svg class="r" style="left:190.0px;top:88.0px;" width="154" height="364" viewBox="0 0 154 364"><g stroke="#e3e3e3" stroke-width="0.8" stroke-dasharray="1.6,1.6"><line x1="0" y1="17.3" x2="153" y2="17.3"/><line x1="0" y1="30.8" x2="153" y2="30.8"/><line x1="0" y1="44.2" x2="153" y2="44.2"/><line x1="0" y1="57.7" x2="153" y2="57.7"/><line x1="0" y1="71.2" x2="153" y2="71.2"/><line x1="0" y1="84.7" x2="153" y2="84.7"/><line x1="0" y1="98.1" x2="153" y2="98.1"/><line x1="0" y1="111.6" x2="153" y2="111.6"/><line x1="0" y1="125.1" x2="153" y2="125.1"/><line x1="0" y1="138.5" x2="153" y2="138.5"/><line x1="0" y1="152.0" x2="153" y2="152.0"/><line x1="0" y1="165.5" x2="153" y2="165.5"/><line x1="0" y1="178.9" x2="153" y2="178.9"/><line x1="0" y1="192.4" x2="153" y2="192.4"/><line x1="0" y1="205.9" x2="153" y2="205.9"/><line x1="0" y1="219.4" x2="153" y2="219.4"/><line x1="0" y1="232.8" x2="153" y2="232.8"/><line x1="0" y1="246.3" x2="153" y2="246.3"/><line x1="0" y1="259.8" x2="153" y2="259.8"/><line x1="0" y1="273.2" x2="153" y2="273.2"/><line x1="0" y1="286.7" x2="153" y2="286.7"/><line x1="21.0" y1="17" x2="21.0" y2="289"/><line x1="42.9" y1="17" x2="42.9" y2="289"/><line x1="64.8" y1="17" x2="64.8" y2="289"/><line x1="86.7" y1="17" x2="86.7" y2="289"/><line x1="108.6" y1="17" x2="108.6" y2="289"/><line x1="130.5" y1="17" x2="130.5" y2="289"/><line x1="152.4" y1="17" x2="152.4" y2="289"/></g><polyline fill="none" stroke="#e2504a" stroke-width="1.5" stroke-linejoin="round" points="0.0,153.5 11.5,153.5 13.5,134.0 20.0,134.0 22.5,120.5 25.5,120.5 29.0,134.0 31.0,134.0 32.5,145.0 34.0,145.0 36.0,134.0 38.0,145.0 40.0,134.0 53.0,134.0 56.0,153.5 58.5,147.0 60.5,153.5 64.0,153.5 72.0,120.5 77.0,120.5 79.0,87.0 94.0,87.0 98.0,93.5 102.0,87.0 104.0,87.0 110.0,120.5 114.0,120.5 120.0,134.0 122.0,134.0 126.0,147.0 153.5,147.0"/><polyline fill="none" stroke="#1e5fc4" stroke-width="1.5" stroke-linejoin="round" points="0.0,160.5 6.0,160.5 8.5,173.5 11.5,153.5 70.0,153.5 75.0,140.5 78.0,120.5 80.0,93.5 82.5,107.0 86.0,93.5 89.0,93.5 93.0,107.0 96.0,107.0 101.0,147.0 104.0,107.0 107.0,147.0 111.0,153.5 129.0,153.5 134.5,173.5 138.0,160.5 153.5,160.5"/></svg>
<div class="r" style="left:344.3px;top:88.2px;width:153.7px;height:349.0px;background:#fff;"></div>
<div class="t" style="top:92.0px;font-size:8.3px;color:#1a1a1a;transform:scaleX(0.921);transform-origin:50% 50%;left:269.0px;width:200px;text-align:center;">Volume</div>
<div class="t" style="top:92.0px;font-size:8.3px;color:#1a1a1a;transform:scaleX(0.899);transform-origin:50% 50%;left:319.5px;width:200px;text-align:center;">Preço</div>
<div class="t" style="top:92.0px;font-size:8.3px;color:#1a1a1a;transform:scaleX(0.867);transform-origin:50% 50%;left:371.0px;width:200px;text-align:center;">Negociação</div>
<div class="r" style="left:394.2px;top:90.0px;width:0.7px;height:16.0px;background:#ececec;"></div>
<div class="r" style="left:445.8px;top:90.0px;width:0.7px;height:16.0px;background:#ececec;"></div>
<div class="r" style="left:344.5px;top:119.0px;width:153.0px;height:0.7px;background:#dedede;"></div>
<div class="r" style="left:344.5px;top:132.6px;width:153.0px;height:0.7px;background:#dedede;"></div>
<div class="r" style="left:344.5px;top:146.2px;width:153.0px;height:0.7px;background:#dedede;"></div>
<div class="r" style="left:344.5px;top:159.8px;width:153.0px;height:0.7px;background:#dedede;"></div>
<div class="r" style="left:344.5px;top:323.0px;width:153.0px;height:0.7px;background:#dedede;"></div>
<div class="r" style="left:344.5px;top:336.6px;width:153.0px;height:0.7px;background:#dedede;"></div>
<div class="r" style="left:344.5px;top:350.2px;width:153.0px;height:0.7px;background:#dedede;"></div>
<div class="r" style="left:344.5px;top:363.8px;width:153.0px;height:0.7px;background:#dedede;"></div>
<div class="r" style="left:344.5px;top:377.4px;width:153.0px;height:0.7px;background:#dedede;"></div>
<div class="r" style="left:344.5px;top:173.2px;width:153.5px;height:0.7px;background:#e2e2e2;"></div>
<div class="r" style="left:344.5px;top:173.8px;width:49.8px;height:13.0px;background:linear-gradient(90deg,#b09cb4 0%,#d9c3dc 45%,#f6daf5 100%);"></div>
<div class="r" style="left:394.3px;top:173.8px;width:51.5px;height:13.0px;background:#fadcf9;"></div>
<div class="r" style="left:394.2px;top:173.8px;width:0.6px;height:13.0px;background:#e8dcea;"></div>
<div class="t" style="top:174.0px;font-size:8.4px;color:#1a1a1a;transform:scaleX(0.928);transform-origin:100% 50%;right:675.5px;">25.00</div>
<div class="t" style="top:174.0px;font-size:8.4px;color:#1a1a1a;transform:scaleX(0.906);transform-origin:50% 50%;left:319.8px;width:200px;text-align:center;">105.931</div>
<div class="r" style="left:447.0px;top:174.4px;width:11.2px;height:11.8px;background:#fdfdfd;border:1px solid #e2e2e2;"></div>
<svg class="r" style="left:450.0px;top:178.0px;" width="6" height="4" viewBox="0 0 6 4"><path d="M0.6,0.7 L3,3 L5.4,0.7" stroke="#d8404a" stroke-width="1.2" fill="none"/></svg>
<div class="r" style="left:485.3px;top:174.4px;width:11.2px;height:11.8px;background:#fdfdfd;border:1px solid #e2e2e2;"></div>
<svg class="r" style="left:488.0px;top:178.0px;" width="6" height="4" viewBox="0 0 6 4"><path d="M0.6,3.2 L3,0.9 L5.4,3.2" stroke="#3a4ab0" stroke-width="1.2" fill="none"/></svg>
<div class="r" style="left:344.5px;top:186.8px;width:153.5px;height:0.7px;background:#e2e2e2;"></div>
<div class="r" style="left:355.5px;top:187.4px;width:38.8px;height:13.0px;background:linear-gradient(90deg,#b09cb4 0%,#d9c3dc 45%,#f6daf5 100%);"></div>
<div class="r" style="left:394.3px;top:187.4px;width:51.5px;height:13.0px;background:#fadcf9;"></div>
<div class="r" style="left:394.2px;top:187.4px;width:0.6px;height:13.0px;background:#e8dcea;"></div>
<div class="t" style="top:187.6px;font-size:8.4px;color:#1a1a1a;transform:scaleX(0.928);transform-origin:100% 50%;right:675.5px;">20.00</div>
<div class="t" style="top:187.6px;font-size:8.4px;color:#1a1a1a;transform:scaleX(0.906);transform-origin:50% 50%;left:319.8px;width:200px;text-align:center;">105.930</div>
<div class="r" style="left:447.0px;top:188.0px;width:11.2px;height:11.8px;background:#fdfdfd;border:1px solid #e2e2e2;"></div>
<svg class="r" style="left:450.0px;top:191.6px;" width="6" height="4" viewBox="0 0 6 4"><path d="M0.6,0.7 L3,3 L5.4,0.7" stroke="#d8404a" stroke-width="1.2" fill="none"/></svg>
<div class="r" style="left:485.3px;top:188.0px;width:11.2px;height:11.8px;background:#fdfdfd;border:1px solid #e2e2e2;"></div>
<svg class="r" style="left:488.0px;top:191.6px;" width="6" height="4" viewBox="0 0 6 4"><path d="M0.6,3.2 L3,0.9 L5.4,3.2" stroke="#3a4ab0" stroke-width="1.2" fill="none"/></svg>
<div class="r" style="left:344.5px;top:200.4px;width:153.5px;height:0.7px;background:#e2e2e2;"></div>
<div class="r" style="left:365.0px;top:201.0px;width:29.3px;height:13.0px;background:linear-gradient(90deg,#b09cb4 0%,#d9c3dc 45%,#f6daf5 100%);"></div>
<div class="r" style="left:394.3px;top:201.0px;width:51.5px;height:13.0px;background:#fadcf9;"></div>
<div class="r" style="left:394.2px;top:201.0px;width:0.6px;height:13.0px;background:#e8dcea;"></div>
<div class="t" style="top:201.2px;font-size:8.4px;color:#1a1a1a;transform:scaleX(0.928);transform-origin:100% 50%;right:675.5px;">15.00</div>
<div class="t" style="top:201.2px;font-size:8.4px;color:#1a1a1a;transform:scaleX(0.906);transform-origin:50% 50%;left:319.8px;width:200px;text-align:center;">105.929</div>
<div class="r" style="left:447.0px;top:201.6px;width:11.2px;height:11.8px;background:#fdfdfd;border:1px solid #e2e2e2;"></div>
<svg class="r" style="left:450.0px;top:205.2px;" width="6" height="4" viewBox="0 0 6 4"><path d="M0.6,0.7 L3,3 L5.4,0.7" stroke="#d8404a" stroke-width="1.2" fill="none"/></svg>
<div class="r" style="left:485.3px;top:201.6px;width:11.2px;height:11.8px;background:#fdfdfd;border:1px solid #e2e2e2;"></div>
<svg class="r" style="left:488.0px;top:205.2px;" width="6" height="4" viewBox="0 0 6 4"><path d="M0.6,3.2 L3,0.9 L5.4,3.2" stroke="#3a4ab0" stroke-width="1.2" fill="none"/></svg>
<div class="r" style="left:344.5px;top:214.0px;width:153.5px;height:0.7px;background:#e2e2e2;"></div>
<div class="r" style="left:365.0px;top:214.6px;width:29.3px;height:13.0px;background:linear-gradient(90deg,#b09cb4 0%,#d9c3dc 45%,#f6daf5 100%);"></div>
<div class="r" style="left:394.3px;top:214.6px;width:51.5px;height:13.0px;background:#fadcf9;"></div>
<div class="r" style="left:394.2px;top:214.6px;width:0.6px;height:13.0px;background:#e8dcea;"></div>
<div class="t" style="top:214.8px;font-size:8.4px;color:#1a1a1a;transform:scaleX(0.928);transform-origin:100% 50%;right:675.5px;">15.00</div>
<div class="t" style="top:214.8px;font-size:8.4px;color:#1a1a1a;transform:scaleX(0.906);transform-origin:50% 50%;left:319.8px;width:200px;text-align:center;">105.928</div>
<div class="r" style="left:447.0px;top:215.2px;width:11.2px;height:11.8px;background:#fdfdfd;border:1px solid #e2e2e2;"></div>
<svg class="r" style="left:450.0px;top:218.8px;" width="6" height="4" viewBox="0 0 6 4"><path d="M0.6,0.7 L3,3 L5.4,0.7" stroke="#d8404a" stroke-width="1.2" fill="none"/></svg>
<div class="r" style="left:485.3px;top:215.2px;width:11.2px;height:11.8px;background:#fdfdfd;border:1px solid #e2e2e2;"></div>
<svg class="r" style="left:488.0px;top:218.8px;" width="6" height="4" viewBox="0 0 6 4"><path d="M0.6,3.2 L3,0.9 L5.4,3.2" stroke="#3a4ab0" stroke-width="1.2" fill="none"/></svg>
<div class="r" style="left:344.5px;top:227.6px;width:153.5px;height:0.7px;background:#e2e2e2;"></div>
<div class="r" style="left:385.0px;top:228.2px;width:9.3px;height:13.0px;background:linear-gradient(90deg,#b09cb4 0%,#d9c3dc 45%,#f6daf5 100%);"></div>
<div class="r" style="left:394.3px;top:228.2px;width:51.5px;height:13.0px;background:#fadcf9;"></div>
<div class="r" style="left:394.2px;top:228.2px;width:0.6px;height:13.0px;background:#e8dcea;"></div>
<div class="t" style="top:228.4px;font-size:8.4px;color:#1a1a1a;transform:scaleX(0.948);transform-origin:100% 50%;right:675.5px;">5.00</div>
<div class="t" style="top:228.4px;font-size:8.4px;color:#1a1a1a;transform:scaleX(0.906);transform-origin:50% 50%;left:319.8px;width:200px;text-align:center;">105.927</div>
<div class="r" style="left:447.0px;top:228.8px;width:11.2px;height:11.8px;background:#fdfdfd;border:1px solid #e2e2e2;"></div>
<svg class="r" style="left:450.0px;top:232.4px;" width="6" height="4" viewBox="0 0 6 4"><path d="M0.6,0.7 L3,3 L5.4,0.7" stroke="#d8404a" stroke-width="1.2" fill="none"/></svg>
<div class="r" style="left:485.3px;top:228.8px;width:11.2px;height:11.8px;background:#fdfdfd;border:1px solid #e2e2e2;"></div>
<svg class="r" style="left:488.0px;top:232.4px;" width="6" height="4" viewBox="0 0 6 4"><path d="M0.6,3.2 L3,0.9 L5.4,3.2" stroke="#3a4ab0" stroke-width="1.2" fill="none"/></svg>
<div class="r" style="left:344.5px;top:241.2px;width:153.5px;height:0.7px;background:#e2e2e2;"></div>
<div class="r" style="left:365.0px;top:241.8px;width:29.3px;height:13.0px;background:linear-gradient(90deg,#8f93a8 0%,#b4bed6 45%,#d2e0f8 100%);"></div>
<div class="r" style="left:394.3px;top:241.8px;width:51.5px;height:13.0px;background:#d3e3fb;"></div>
<div class="r" style="left:394.2px;top:241.8px;width:0.6px;height:13.0px;background:#c4d4ec;"></div>
<div class="t" style="top:242.0px;font-size:8.4px;color:#1a1a1a;transform:scaleX(0.928);transform-origin:100% 50%;right:675.5px;">15.00</div>
<div class="t" style="top:242.0px;font-size:8.4px;color:#1a1a1a;transform:scaleX(0.906);transform-origin:50% 50%;left:319.8px;width:200px;text-align:center;">105.923</div>
<div class="r" style="left:447.0px;top:242.4px;width:11.2px;height:11.8px;background:#fdfdfd;border:1px solid #e2e2e2;"></div>
<svg class="r" style="left:450.0px;top:246.0px;" width="6" height="4" viewBox="0 0 6 4"><path d="M0.6,0.7 L3,3 L5.4,0.7" stroke="#d8404a" stroke-width="1.2" fill="none"/></svg>
<div class="r" style="left:485.3px;top:242.4px;width:11.2px;height:11.8px;background:#fdfdfd;border:1px solid #e2e2e2;"></div>
<svg class="r" style="left:488.0px;top:246.0px;" width="6" height="4" viewBox="0 0 6 4"><path d="M0.6,3.2 L3,0.9 L5.4,3.2" stroke="#3a4ab0" stroke-width="1.2" fill="none"/></svg>
<div class="r" style="left:344.5px;top:254.8px;width:153.5px;height:0.7px;background:#e2e2e2;"></div>
<div class="r" style="left:365.0px;top:255.4px;width:29.3px;height:13.0px;background:linear-gradient(90deg,#8f93a8 0%,#b4bed6 45%,#d2e0f8 100%);"></div>
<div class="r" style="left:394.3px;top:255.4px;width:51.5px;height:13.0px;background:#d3e3fb;"></div>
<div class="r" style="left:394.2px;top:255.4px;width:0.6px;height:13.0px;background:#c4d4ec;"></div>
<div class="t" style="top:255.6px;font-size:8.4px;color:#1a1a1a;transform:scaleX(0.928);transform-origin:100% 50%;right:675.5px;">15.00</div>
<div class="t" style="top:255.6px;font-size:8.4px;color:#1a1a1a;transform:scaleX(0.906);transform-origin:50% 50%;left:319.8px;width:200px;text-align:center;">105.922</div>
<div class="r" style="left:447.0px;top:256.0px;width:11.2px;height:11.8px;background:#fdfdfd;border:1px solid #e2e2e2;"></div>
<svg class="r" style="left:450.0px;top:259.6px;" width="6" height="4" viewBox="0 0 6 4"><path d="M0.6,0.7 L3,3 L5.4,0.7" stroke="#d8404a" stroke-width="1.2" fill="none"/></svg>
<div class="r" style="left:485.3px;top:256.0px;width:11.2px;height:11.8px;background:#fdfdfd;border:1px solid #e2e2e2;"></div>
<svg class="r" style="left:488.0px;top:259.6px;" width="6" height="4" viewBox="0 0 6 4"><path d="M0.6,3.2 L3,0.9 L5.4,3.2" stroke="#3a4ab0" stroke-width="1.2" fill="none"/></svg>
<div class="r" style="left:344.5px;top:268.4px;width:153.5px;height:0.7px;background:#e2e2e2;"></div>
<div class="r" style="left:344.5px;top:269.0px;width:49.8px;height:13.0px;background:linear-gradient(90deg,#8f93a8 0%,#b4bed6 45%,#d2e0f8 100%);"></div>
<div class="r" style="left:394.3px;top:269.0px;width:51.5px;height:13.0px;background:#d3e3fb;"></div>
<div class="r" style="left:394.2px;top:269.0px;width:0.6px;height:13.0px;background:#c4d4ec;"></div>
<div class="t" style="top:269.2px;font-size:8.4px;color:#1a1a1a;transform:scaleX(0.928);transform-origin:100% 50%;right:675.5px;">25.00</div>
<div class="t" style="top:269.2px;font-size:8.4px;color:#1a1a1a;transform:scaleX(0.906);transform-origin:50% 50%;left:319.8px;width:200px;text-align:center;">105.921</div>
<div class="r" style="left:447.0px;top:269.6px;width:11.2px;height:11.8px;background:#fdfdfd;border:1px solid #e2e2e2;"></div>
<svg class="r" style="left:450.0px;top:273.2px;" width="6" height="4" viewBox="0 0 6 4"><path d="M0.6,0.7 L3,3 L5.4,0.7" stroke="#d8404a" stroke-width="1.2" fill="none"/></svg>
<div class="r" style="left:485.3px;top:269.6px;width:11.2px;height:11.8px;background:#fdfdfd;border:1px solid #e2e2e2;"></div>
<svg class="r" style="left:488.0px;top:273.2px;" width="6" height="4" viewBox="0 0 6 4"><path d="M0.6,3.2 L3,0.9 L5.4,3.2" stroke="#3a4ab0" stroke-width="1.2" fill="none"/></svg>
<div class="r" style="left:344.5px;top:282.0px;width:153.5px;height:0.7px;background:#e2e2e2;"></div>
<div class="r" style="left:344.5px;top:282.6px;width:49.8px;height:13.0px;background:linear-gradient(90deg,#8f93a8 0%,#b4bed6 45%,#d2e0f8 100%);"></div>
<div class="r" style="left:394.3px;top:282.6px;width:51.5px;height:13.0px;background:#d3e3fb;"></div>
<div class="r" style="left:394.2px;top:282.6px;width:0.6px;height:13.0px;background:#c4d4ec;"></div>
<div class="t" style="top:282.8px;font-size:8.4px;color:#1a1a1a;transform:scaleX(0.928);transform-origin:100% 50%;right:675.5px;">25.00</div>
<div class="t" style="top:282.8px;font-size:8.4px;color:#1a1a1a;transform:scaleX(0.906);transform-origin:50% 50%;left:319.8px;width:200px;text-align:center;">105.920</div>
<div class="r" style="left:447.0px;top:283.2px;width:11.2px;height:11.8px;background:#fdfdfd;border:1px solid #e2e2e2;"></div>
<svg class="r" style="left:450.0px;top:286.8px;" width="6" height="4" viewBox="0 0 6 4"><path d="M0.6,0.7 L3,3 L5.4,0.7" stroke="#d8404a" stroke-width="1.2" fill="none"/></svg>
<div class="r" style="left:485.3px;top:283.2px;width:11.2px;height:11.8px;background:#fdfdfd;border:1px solid #e2e2e2;"></div>
<svg class="r" style="left:488.0px;top:286.8px;" width="6" height="4" viewBox="0 0 6 4"><path d="M0.6,3.2 L3,0.9 L5.4,3.2" stroke="#3a4ab0" stroke-width="1.2" fill="none"/></svg>
<div class="r" style="left:344.5px;top:295.6px;width:153.5px;height:0.7px;background:#e2e2e2;"></div>
<div class="r" style="left:374.0px;top:296.2px;width:20.3px;height:13.0px;background:linear-gradient(90deg,#8f93a8 0%,#b4bed6 45%,#d2e0f8 100%);"></div>
<div class="r" style="left:394.3px;top:296.2px;width:51.5px;height:13.0px;background:#d3e3fb;"></div>
<div class="r" style="left:394.2px;top:296.2px;width:0.6px;height:13.0px;background:#c4d4ec;"></div>
<div class="t" style="top:296.4px;font-size:8.4px;color:#1a1a1a;transform:scaleX(0.928);transform-origin:100% 50%;right:675.5px;">10.00</div>
<div class="t" style="top:296.4px;font-size:8.4px;color:#1a1a1a;transform:scaleX(0.906);transform-origin:50% 50%;left:319.8px;width:200px;text-align:center;">105.919</div>
<div class="r" style="left:447.0px;top:296.8px;width:11.2px;height:11.8px;background:#fdfdfd;border:1px solid #e2e2e2;"></div>
<svg class="r" style="left:450.0px;top:300.4px;" width="6" height="4" viewBox="0 0 6 4"><path d="M0.6,0.7 L3,3 L5.4,0.7" stroke="#d8404a" stroke-width="1.2" fill="none"/></svg>
<div class="r" style="left:485.3px;top:296.8px;width:11.2px;height:11.8px;background:#fdfdfd;border:1px solid #e2e2e2;"></div>
<svg class="r" style="left:488.0px;top:300.4px;" width="6" height="4" viewBox="0 0 6 4"><path d="M0.6,3.2 L3,0.9 L5.4,3.2" stroke="#3a4ab0" stroke-width="1.2" fill="none"/></svg>
<div class="r" style="left:344.5px;top:309.2px;width:153.5px;height:0.7px;background:#dedede;"></div>
<div class="r" style="left:344.3px;top:240.6px;width:153.7px;height:1.3px;background:#555;"></div>
<div class="r" style="left:343.8px;top:88.2px;width:0.9px;height:379.3px;background:#9c9c9c;"></div>
<svg class="r" style="left:429.5px;top:212.0px;" width="10" height="15" viewBox="0 0 10 15"><path d="M1,1 L1,11.5 L3.6,9.2 L5.6,13.6 L7.4,12.8 L5.5,8.6 L9,8.4 Z" fill="#fff" stroke="#111" stroke-width="0.9"/></svg>
<div class="r" style="left:344.3px;top:437.0px;width:153.7px;height:15.0px;background:#e9e9e9;"></div>
<svg class="r" style="left:349.4px;top:443.6px;" width="4" height="2.5" viewBox="0 0 4 2.5"><path d="M0,0 L4,0 L2,2.5 Z" fill="#222"/></svg>
<div class="r" style="left:358.5px;top:438.0px;width:22.8px;height:13.4px;background:#fff;border:1px solid #c2c2c2;"></div>
<div class="t" style="top:438.8px;font-size:8px;color:#9a9a9a;left:360.1px;">sl</div>
<div class="t" style="top:438.8px;font-size:8.3px;color:#333;right:688.2px;">0</div>
<svg class="r" style="left:385.8px;top:443.4px;" width="4" height="2.5" viewBox="0 0 4 2.5"><path d="M0,2.5 L4,2.5 L2,0 Z" fill="#222"/></svg>
<svg class="r" style="left:400.4px;top:443.6px;" width="4" height="2.5" viewBox="0 0 4 2.5"><path d="M0,0 L4,0 L2,2.5 Z" fill="#222"/></svg>
<div class="r" style="left:409.0px;top:438.0px;width:24.6px;height:13.4px;background:#fff;border:1px solid #c2c2c2;"></div>
<div class="t" style="top:438.8px;font-size:8.3px;color:#333;right:635.9px;">0.01</div>
<svg class="r" style="left:437.8px;top:443.4px;" width="4" height="2.5" viewBox="0 0 4 2.5"><path d="M0,2.5 L4,2.5 L2,0 Z" fill="#222"/></svg>
<svg class="r" style="left:451.4px;top:443.6px;" width="4" height="2.5" viewBox="0 0 4 2.5"><path d="M0,0 L4,0 L2,2.5 Z" fill="#222"/></svg>
<div class="r" style="left:460.6px;top:438.0px;width:23.4px;height:13.4px;background:#fff;border:1px solid #c2c2c2;"></div>
<div class="t" style="top:438.8px;font-size:8px;color:#9a9a9a;left:462.2px;">tp</div>
<div class="t" style="top:438.8px;font-size:8.3px;color:#333;right:585.5px;">0</div>
<svg class="r" style="left:488.8px;top:443.4px;" width="4" height="2.5" viewBox="0 0 4 2.5"><path d="M0,2.5 L4,2.5 L2,0 Z" fill="#222"/></svg>
<div class="r" style="left:345.4px;top:452.3px;width:49.4px;height:13.6px;background:linear-gradient(180deg,#f08a88 0%,#e66a6a 55%,#d85a5c 100%);border-radius:1.5px;"></div>
<div class="t" style="top:453.3px;font-size:8.3px;color:#1a1a1a;transform:scaleX(0.950);transform-origin:50% 50%;left:270.0px;width:200px;text-align:center;">Vender</div>
<div class="r" style="left:396.5px;top:452.3px;width:50.0px;height:13.6px;background:linear-gradient(180deg,#efef9a 0%,#e4e480 55%,#d2d26c 100%);border-radius:1.5px;"></div>
<div class="t" style="top:453.3px;font-size:8.3px;color:#1a1a1a;transform:scaleX(0.929);transform-origin:50% 50%;left:321.5px;width:200px;text-align:center;">Fechar</div>
<div class="r" style="left:448.0px;top:452.3px;width:48.6px;height:13.6px;background:linear-gradient(180deg,#86a8ec 0%,#6c92de 55%,#5c80cc 100%);border-radius:1.5px;"></div>
<div class="t" style="top:453.3px;font-size:8.3px;color:#1a1a1a;transform:scaleX(0.898);transform-origin:50% 50%;left:372.3px;width:200px;text-align:center;">Comprar</div>
<div class="r" style="left:500.3px;top:58.2px;width:521.2px;height:2.2px;background:linear-gradient(180deg,#d4d4d4 0%,#a6a6a6 50%,#8e8e8e 100%);"></div>
<div class="r" style="left:500.3px;top:58.2px;width:2.2px;height:398.0px;background:linear-gradient(90deg,#d4d4d4 0%,#a6a6a6 50%,#8e8e8e 100%);"></div>
<div class="r" style="left:502.4px;top:60.3px;width:519.0px;height:395.7px;background:#fff;"></div>
<div class="r" style="left:502.5px;top:61.3px;width:482.4px;height:379.6px;background:#fff;border:0.9px solid #4a4a4a;"></div>
<svg class="r" style="left:0;top:0" width="1067" height="600" viewBox="0 0 1067 600"><line x1="503.5" y1="175.3" x2="984" y2="175.3" stroke="#5aa594" stroke-width="0.8" stroke-dasharray="1.6,1.6"/><line x1="503.5" y1="188.5" x2="984" y2="188.5" stroke="#8cb7b1" stroke-width="0.9"/><path d="M503.0,320.7 L515.0,322.2 L527.0,321.5 L537.5,325.2 L546.5,328.7 L551.7,326.7 L563.0,326.0 L568.0,317.0 L573.0,303.0 L584.0,301.0 L595.0,301.0 L606.0,298.0 L617.5,293.7 L622.7,284.0 L632.5,279.5 L643.7,271.2 L652.0,266.0 L655.0,257.0 L661.0,252.5 L665.8,245.0 L673.0,239.0 L685.0,234.5 L694.0,232.7 L703.0,232.2 L715.0,234.5 L725.5,237.5 L735.0,238.7 L752.0,240.0 L769.5,241.5 L771.7,236.5 L780.0,228.2 L786.0,223.7 L795.0,215.5 L804.0,206.5 L813.0,201.2 L819.0,196.7 L825.0,190.0 L830.0,185.0 L835.0,180.0 L840.0,172.0 L845.0,168.5 L852.0,168.5 L856.0,167.5 L862.0,168.0 L867.0,171.0 L873.0,174.5 L878.0,175.5 L882.0,171.0 L889.5,169.5" fill="none" stroke="#86b3a6" stroke-width="0.85" stroke-linejoin="round" opacity="1"/><path d="M503.0,367.7 L515.0,366.5 L527.0,363.5 L534.5,357.5 L540.5,351.5 L546.5,349.2 L563.0,349.2 L569.0,352.2 L575.0,354.5 L584.0,356.0 L593.0,357.5 L605.0,356.7 L614.0,354.5 L620.0,353.0 L635.0,349.5 L650.0,344.5 L660.0,340.0 L675.0,334.0 L690.0,326.0 L700.0,318.5 L710.4,307.2 L720.0,296.0 L730.0,288.0 L742.0,282.0 L752.0,278.5 L759.0,279.0 L770.0,279.0 L775.0,284.0 L782.0,287.0 L790.0,289.0 L800.0,290.5 L812.5,289.0 L825.0,289.0 L835.0,288.0 L842.0,283.0 L849.3,276.0 L856.0,267.0 L863.5,256.2 L869.0,248.5 L874.8,242.0 L882.0,237.0 L889.5,233.5" fill="none" stroke="#86b3a6" stroke-width="0.85" stroke-linejoin="round" opacity="1"/><path d="M503.0,340.5 L515.0,342.8 L530.0,342.2 L545.0,340.0 L560.0,337.0 L575.0,333.8 L590.0,330.0 L605.0,325.4 L620.0,320.8 L640.0,311.6 L655.0,301.8 L670.0,291.2 L685.0,280.8 L700.0,274.8 L715.0,269.5 L730.0,263.2 L742.5,261.5 L757.5,259.2 L769.5,258.0 L780.0,254.8 L795.0,249.4 L810.0,244.2 L825.0,237.0 L840.0,229.4 L852.0,222.8 L857.0,220.0 L865.0,215.5 L878.0,208.5 L889.5,202.3" fill="none" stroke="#8aa79c" stroke-width="0.8" stroke-linejoin="round" opacity="1"/><path d="M503.0,341.7 L515.0,344.0 L530.0,343.2 L545.0,341.0 L560.0,338.0 L575.0,335.0 L590.0,331.2 L605.0,326.7 L620.0,322.2 L625.0,320.0 L640.0,313.2 L655.0,303.5 L670.0,293.0 L685.0,282.5 L700.0,276.5 L715.0,271.2 L722.0,268.5 L730.0,265.2 L742.5,263.0 L757.5,260.7 L769.5,259.5 L780.0,256.5 L795.0,251.2 L810.0,246.0 L825.0,239.0 L840.0,232.0 L852.0,227.5 L865.0,220.0 L878.0,211.5 L889.5,204.0" fill="none" stroke="#c9605c" stroke-width="0.9" stroke-linejoin="round" opacity="1"/><line x1="502.4" y1="328.0" x2="502.4" y2="334.5" stroke="#269a8f" stroke-width="0.9"/><rect x="500.8" y="328.7" width="3.2" height="5.1" fill="#269a8f"/><line x1="507.9" y1="328.0" x2="507.9" y2="347.2" stroke="#e4524f" stroke-width="0.9"/><rect x="506.3" y="328.7" width="3.2" height="18.0" fill="#e4524f"/><line x1="513.3" y1="338.0" x2="513.3" y2="347.0" stroke="#269a8f" stroke-width="0.9"/><rect x="511.7" y="342.5" width="3.2" height="4.2" fill="#269a8f"/><line x1="518.8" y1="330.5" x2="518.8" y2="343.5" stroke="#e4524f" stroke-width="0.9"/><rect x="517.2" y="340.0" width="3.2" height="3.0" fill="#e4524f"/><line x1="524.2" y1="334.0" x2="524.2" y2="343.2" stroke="#269a8f" stroke-width="0.9"/><rect x="522.6" y="335.7" width="3.2" height="7.1" fill="#269a8f"/><line x1="529.7" y1="335.0" x2="529.7" y2="343.7" stroke="#e4524f" stroke-width="0.9"/><rect x="528.1" y="335.7" width="3.2" height="5.0" fill="#e4524f"/><line x1="535.1" y1="340.5" x2="535.1" y2="342.0" stroke="#b9b9b9" stroke-width="0.9"/><rect x="533.6" y="341.0" width="3.0" height="0.8" fill="#b9b9b9"/><line x1="540.6" y1="333.5" x2="540.6" y2="343.0" stroke="#e4524f" stroke-width="0.9"/><rect x="539.0" y="340.7" width="3.2" height="1.8" fill="#e4524f"/><line x1="546.1" y1="340.5" x2="546.1" y2="343.2" stroke="#269a8f" stroke-width="0.9"/><rect x="544.5" y="341.0" width="3.2" height="1.8" fill="#269a8f"/><line x1="551.5" y1="326.7" x2="551.5" y2="339.5" stroke="#269a8f" stroke-width="0.9"/><rect x="549.9" y="328.0" width="3.2" height="8.0" fill="#269a8f"/><line x1="557.0" y1="327.5" x2="557.0" y2="334.0" stroke="#e4524f" stroke-width="0.9"/><rect x="555.4" y="330.0" width="3.2" height="3.5" fill="#e4524f"/><line x1="562.4" y1="333.0" x2="562.4" y2="334.2" stroke="#b9b9b9" stroke-width="0.9"/><rect x="560.9" y="333.4" width="3.0" height="0.8" fill="#b9b9b9"/><line x1="567.9" y1="315.8" x2="567.9" y2="334.3" stroke="#269a8f" stroke-width="0.9"/><rect x="566.3" y="317.7" width="3.2" height="16.1" fill="#269a8f"/><line x1="573.3" y1="302.0" x2="573.3" y2="318.3" stroke="#269a8f" stroke-width="0.9"/><rect x="571.7" y="304.0" width="3.2" height="13.7" fill="#269a8f"/><line x1="578.8" y1="303.5" x2="578.8" y2="318.5" stroke="#e4524f" stroke-width="0.9"/><rect x="577.2" y="304.0" width="3.2" height="12.7" fill="#e4524f"/><line x1="584.3" y1="302.8" x2="584.3" y2="316.4" stroke="#269a8f" stroke-width="0.9"/><rect x="582.7" y="306.0" width="3.2" height="9.8" fill="#269a8f"/><line x1="589.7" y1="295.0" x2="589.7" y2="306.5" stroke="#269a8f" stroke-width="0.9"/><rect x="588.1" y="304.0" width="3.2" height="2.0" fill="#269a8f"/><line x1="595.2" y1="303.5" x2="595.2" y2="306.5" stroke="#e4524f" stroke-width="0.9"/><rect x="593.6" y="304.0" width="3.2" height="2.0" fill="#e4524f"/><line x1="600.6" y1="304.2" x2="600.6" y2="311.8" stroke="#e4524f" stroke-width="0.9"/><rect x="599.0" y="305.7" width="3.2" height="5.6" fill="#e4524f"/><line x1="606.1" y1="310.8" x2="606.1" y2="317.7" stroke="#e4524f" stroke-width="0.9"/><rect x="604.5" y="311.3" width="3.2" height="4.7" fill="#e4524f"/><line x1="611.5" y1="304.2" x2="611.5" y2="316.6" stroke="#269a8f" stroke-width="0.9"/><rect x="609.9" y="306.0" width="3.2" height="10.0" fill="#269a8f"/><line x1="617.0" y1="294.5" x2="617.0" y2="308.4" stroke="#e9b3b3" stroke-width="0.9"/><rect x="615.5" y="307.6" width="3.0" height="0.8" fill="#e9b3b3"/><line x1="622.5" y1="281.0" x2="622.5" y2="308.7" stroke="#269a8f" stroke-width="0.9"/><rect x="620.9" y="281.7" width="3.2" height="24.8" fill="#269a8f"/><line x1="627.9" y1="278.0" x2="627.9" y2="293.0" stroke="#e4524f" stroke-width="0.9"/><rect x="626.3" y="281.7" width="3.2" height="7.5" fill="#e4524f"/><line x1="633.4" y1="281.0" x2="633.4" y2="290.0" stroke="#269a8f" stroke-width="0.9"/><rect x="631.8" y="281.7" width="3.2" height="7.5" fill="#269a8f"/><line x1="638.8" y1="278.0" x2="638.8" y2="288.5" stroke="#269a8f" stroke-width="0.9"/><rect x="637.2" y="279.5" width="3.2" height="2.5" fill="#269a8f"/><line x1="644.3" y1="275.5" x2="644.3" y2="287.7" stroke="#269a8f" stroke-width="0.9"/><rect x="642.7" y="276.0" width="3.2" height="3.5" fill="#269a8f"/><line x1="649.7" y1="275.5" x2="649.7" y2="279.5" stroke="#e4524f" stroke-width="0.9"/><rect x="648.1" y="276.0" width="3.2" height="2.0" fill="#e4524f"/><line x1="655.2" y1="256.5" x2="655.2" y2="280.3" stroke="#269a8f" stroke-width="0.9"/><rect x="653.6" y="257.3" width="3.2" height="22.5" fill="#269a8f"/><line x1="660.7" y1="241.2" x2="660.7" y2="258.0" stroke="#269a8f" stroke-width="0.9"/><rect x="659.1" y="253.2" width="3.2" height="4.1" fill="#269a8f"/><line x1="666.1" y1="244.0" x2="666.1" y2="255.5" stroke="#9fd0ca" stroke-width="0.9"/><rect x="664.6" y="252.2" width="3.0" height="0.8" fill="#9fd0ca"/><line x1="671.6" y1="250.0" x2="671.6" y2="273.5" stroke="#269a8f" stroke-width="0.9"/><rect x="670.0" y="250.7" width="3.2" height="2.1" fill="#269a8f"/><line x1="677.0" y1="248.7" x2="677.0" y2="255.5" stroke="#b9b9b9" stroke-width="0.9"/><rect x="675.5" y="254.8" width="3.0" height="0.8" fill="#b9b9b9"/><line x1="682.5" y1="249.5" x2="682.5" y2="257.3" stroke="#e4524f" stroke-width="0.9"/><rect x="680.9" y="250.2" width="3.2" height="5.6" fill="#e4524f"/><line x1="687.9" y1="252.8" x2="687.9" y2="257.0" stroke="#269a8f" stroke-width="0.9"/><rect x="686.3" y="253.2" width="3.2" height="2.3" fill="#269a8f"/><line x1="693.4" y1="253.2" x2="693.4" y2="271.2" stroke="#e4524f" stroke-width="0.9"/><rect x="691.8" y="254.7" width="3.2" height="14.6" fill="#e4524f"/><line x1="698.9" y1="257.7" x2="698.9" y2="270.2" stroke="#269a8f" stroke-width="0.9"/><rect x="697.3" y="261.8" width="3.2" height="7.9" fill="#269a8f"/><line x1="704.3" y1="260.0" x2="704.3" y2="269.3" stroke="#e4524f" stroke-width="0.9"/><rect x="702.7" y="261.8" width="3.2" height="4.9" fill="#e4524f"/><line x1="709.8" y1="255.5" x2="709.8" y2="266.6" stroke="#b9b9b9" stroke-width="0.9"/><rect x="708.3" y="265.9" width="3.0" height="0.8" fill="#b9b9b9"/><line x1="715.2" y1="251.0" x2="715.2" y2="269.3" stroke="#269a8f" stroke-width="0.9"/><rect x="713.6" y="252.8" width="3.2" height="13.9" fill="#269a8f"/><line x1="720.7" y1="241.2" x2="720.7" y2="256.0" stroke="#e4524f" stroke-width="0.9"/><rect x="719.1" y="253.2" width="3.2" height="2.3" fill="#e4524f"/><line x1="726.1" y1="238.0" x2="726.1" y2="256.0" stroke="#269a8f" stroke-width="0.9"/><rect x="724.5" y="241.3" width="3.2" height="14.2" fill="#269a8f"/><line x1="731.6" y1="247.8" x2="731.6" y2="268.0" stroke="#e4524f" stroke-width="0.9"/><rect x="730.0" y="248.5" width="3.2" height="18.0" fill="#e4524f"/><line x1="737.1" y1="265.5" x2="737.1" y2="283.5" stroke="#e4524f" stroke-width="0.9"/><rect x="735.5" y="266.0" width="3.2" height="12.0" fill="#e4524f"/><line x1="742.5" y1="266.5" x2="742.5" y2="282.0" stroke="#269a8f" stroke-width="0.9"/><rect x="740.9" y="271.0" width="3.2" height="7.0" fill="#269a8f"/><line x1="748.0" y1="250.5" x2="748.0" y2="276.0" stroke="#269a8f" stroke-width="0.9"/><rect x="746.4" y="255.0" width="3.2" height="18.0" fill="#269a8f"/><line x1="753.4" y1="245.0" x2="753.4" y2="259.3" stroke="#b9b9b9" stroke-width="0.9"/><rect x="751.9" y="258.6" width="3.0" height="0.8" fill="#b9b9b9"/><line x1="758.9" y1="254.5" x2="758.9" y2="284.0" stroke="#e4524f" stroke-width="0.9"/><rect x="757.3" y="255.0" width="3.2" height="24.5" fill="#e4524f"/><line x1="764.3" y1="253.5" x2="764.3" y2="281.5" stroke="#269a8f" stroke-width="0.9"/><rect x="762.7" y="261.0" width="3.2" height="18.5" fill="#269a8f"/><line x1="769.8" y1="248.5" x2="769.8" y2="264.0" stroke="#269a8f" stroke-width="0.9"/><rect x="768.2" y="250.0" width="3.2" height="12.5" fill="#269a8f"/><line x1="775.2" y1="220.0" x2="775.2" y2="250.0" stroke="#269a8f" stroke-width="0.9"/><rect x="773.6" y="221.5" width="3.2" height="27.1" fill="#269a8f"/><line x1="780.7" y1="212.5" x2="780.7" y2="227.0" stroke="#e4524f" stroke-width="0.9"/><rect x="779.1" y="221.8" width="3.2" height="4.2" fill="#e4524f"/><line x1="786.2" y1="217.0" x2="786.2" y2="232.7" stroke="#269a8f" stroke-width="0.9"/><rect x="784.6" y="223.7" width="3.2" height="2.6" fill="#269a8f"/><line x1="791.6" y1="212.5" x2="791.6" y2="229.0" stroke="#269a8f" stroke-width="0.9"/><rect x="790.0" y="221.8" width="3.2" height="1.9" fill="#269a8f"/><line x1="797.1" y1="208.3" x2="797.1" y2="226.0" stroke="#269a8f" stroke-width="0.9"/><rect x="795.5" y="220.0" width="3.2" height="1.8" fill="#269a8f"/><line x1="802.5" y1="211.0" x2="802.5" y2="223.7" stroke="#b9b9b9" stroke-width="0.9"/><rect x="801.0" y="219.8" width="3.0" height="0.8" fill="#b9b9b9"/><line x1="808.0" y1="214.5" x2="808.0" y2="226.0" stroke="#269a8f" stroke-width="0.9"/><rect x="806.4" y="215.2" width="3.2" height="4.8" fill="#269a8f"/><line x1="813.4" y1="206.2" x2="813.4" y2="220.5" stroke="#e4524f" stroke-width="0.9"/><rect x="811.8" y="215.2" width="3.2" height="4.8" fill="#e4524f"/><line x1="818.9" y1="216.0" x2="818.9" y2="221.5" stroke="#269a8f" stroke-width="0.9"/><rect x="817.3" y="216.7" width="3.2" height="3.3" fill="#269a8f"/><line x1="824.4" y1="194.5" x2="824.4" y2="218.0" stroke="#269a8f" stroke-width="0.9"/><rect x="822.8" y="195.2" width="3.2" height="22.1" fill="#269a8f"/><line x1="829.8" y1="181.0" x2="829.8" y2="200.2" stroke="#e4524f" stroke-width="0.9"/><rect x="828.2" y="195.2" width="3.2" height="4.5" fill="#e4524f"/><line x1="835.3" y1="191.0" x2="835.3" y2="204.2" stroke="#269a8f" stroke-width="0.9"/><rect x="833.7" y="191.8" width="3.2" height="7.9" fill="#269a8f"/><line x1="840.7" y1="174.0" x2="840.7" y2="186.5" stroke="#269a8f" stroke-width="0.9"/><rect x="839.1" y="177.0" width="3.2" height="8.0" fill="#269a8f"/><line x1="846.2" y1="177.0" x2="846.2" y2="184.5" stroke="#e4524f" stroke-width="0.9"/><rect x="844.6" y="178.5" width="3.2" height="4.5" fill="#e4524f"/><line x1="851.6" y1="169.0" x2="851.6" y2="211.0" stroke="#e4524f" stroke-width="0.9"/><rect x="850.0" y="182.0" width="3.2" height="27.0" fill="#e4524f"/><line x1="857.1" y1="196.0" x2="857.1" y2="213.0" stroke="#269a8f" stroke-width="0.9"/><rect x="855.5" y="197.0" width="3.2" height="10.0" fill="#269a8f"/><line x1="862.6" y1="186.0" x2="862.6" y2="216.0" stroke="#e4524f" stroke-width="0.9"/><rect x="861.0" y="195.0" width="3.2" height="20.5" fill="#e4524f"/><line x1="868.0" y1="198.5" x2="868.0" y2="215.0" stroke="#269a8f" stroke-width="0.9"/><rect x="866.4" y="199.0" width="3.2" height="15.0" fill="#269a8f"/><line x1="873.5" y1="184.0" x2="873.5" y2="209.0" stroke="#269a8f" stroke-width="0.9"/><rect x="871.9" y="190.5" width="3.2" height="11.0" fill="#269a8f"/><line x1="878.9" y1="184.0" x2="878.9" y2="191.0" stroke="#269a8f" stroke-width="0.9"/><rect x="877.3" y="186.0" width="3.2" height="2.5" fill="#269a8f"/><line x1="884.4" y1="170.5" x2="884.4" y2="190.0" stroke="#269a8f" stroke-width="0.9"/><rect x="882.8" y="171.0" width="3.2" height="15.5" fill="#269a8f"/><line x1="889.8" y1="169.5" x2="889.8" y2="191.0" stroke="#e4524f" stroke-width="0.9"/><rect x="888.2" y="171.0" width="3.2" height="17.5" fill="#e4524f"/><g fill="#27e22d"><circle cx="502.4" cy="362.0" r="1.6"/><circle cx="507.9" cy="359.7" r="1.6"/><circle cx="513.3" cy="357.0" r="1.6"/><circle cx="518.8" cy="356.0" r="1.6"/><circle cx="524.2" cy="354.5" r="1.6"/><circle cx="529.7" cy="353.4" r="1.6"/><circle cx="535.1" cy="352.2" r="1.6"/><circle cx="540.6" cy="351.0" r="1.6"/><circle cx="546.1" cy="350.0" r="1.6"/><circle cx="551.5" cy="348.8" r="1.6"/><circle cx="557.0" cy="348.2" r="1.6"/><circle cx="562.4" cy="347.0" r="1.6"/><circle cx="567.9" cy="346.0" r="1.6"/><circle cx="573.3" cy="343.5" r="1.6"/><circle cx="578.8" cy="340.5" r="1.6"/><circle cx="584.3" cy="337.7" r="1.6"/><circle cx="589.7" cy="335.0" r="1.6"/><circle cx="595.2" cy="330.5" r="1.6"/><circle cx="600.6" cy="327.2" r="1.6"/><circle cx="606.1" cy="324.2" r="1.6"/><circle cx="611.5" cy="321.5" r="1.6"/><circle cx="617.0" cy="318.5" r="1.6"/><circle cx="622.5" cy="316.7" r="1.6"/><circle cx="627.9" cy="312.2" r="1.6"/><circle cx="633.4" cy="308.7" r="1.6"/><circle cx="638.8" cy="304.7" r="1.6"/><circle cx="644.3" cy="300.5" r="1.6"/><circle cx="649.7" cy="296.7" r="1.6"/><circle cx="655.2" cy="293.0" r="1.6"/><circle cx="660.7" cy="286.7" r="1.6"/><circle cx="666.1" cy="279.5" r="1.6"/><circle cx="671.6" cy="241.7" r="1.6"/><circle cx="677.0" cy="242.3" r="1.6"/><circle cx="682.5" cy="243.2" r="1.6"/><circle cx="687.9" cy="243.8" r="1.6"/><circle cx="693.4" cy="244.4" r="1.6"/><circle cx="698.9" cy="245.0" r="1.6"/><circle cx="704.3" cy="245.4" r="1.6"/><circle cx="709.8" cy="245.9" r="1.6"/><circle cx="715.2" cy="246.2" r="1.6"/><circle cx="720.7" cy="273.2" r="1.6"/><circle cx="726.1" cy="272.6" r="1.6"/><circle cx="731.6" cy="271.0" r="1.6"/><circle cx="737.1" cy="238.0" r="1.6"/><circle cx="742.5" cy="238.7" r="1.6"/><circle cx="748.0" cy="239.5" r="1.6"/><circle cx="753.4" cy="240.2" r="1.6"/><circle cx="758.9" cy="241.0" r="1.6"/><circle cx="764.3" cy="241.7" r="1.6"/><circle cx="769.8" cy="242.8" r="1.6"/><circle cx="775.2" cy="284.5" r="1.6"/><circle cx="780.7" cy="283.5" r="1.6"/><circle cx="786.2" cy="280.5" r="1.6"/><circle cx="791.6" cy="277.8" r="1.6"/><circle cx="797.1" cy="275.2" r="1.6"/><circle cx="802.5" cy="271.5" r="1.6"/><circle cx="808.0" cy="267.6" r="1.6"/><circle cx="813.4" cy="263.5" r="1.6"/><circle cx="818.9" cy="259.3" r="1.6"/><circle cx="824.4" cy="254.8" r="1.6"/><circle cx="829.8" cy="248.5" r="1.6"/><circle cx="835.3" cy="240.2" r="1.6"/><circle cx="840.7" cy="232.7" r="1.6"/><circle cx="846.2" cy="225.0" r="1.6"/><circle cx="851.6" cy="217.5" r="1.6"/><circle cx="857.1" cy="168.0" r="1.6"/><circle cx="862.6" cy="168.0" r="1.6"/><circle cx="868.0" cy="170.0" r="1.6"/><circle cx="873.5" cy="172.5" r="1.6"/><circle cx="878.9" cy="173.6" r="1.6"/><circle cx="884.4" cy="214.8" r="1.6"/><circle cx="889.8" cy="214.5" r="1.6"/></g><path d="M832.3,189.0 L834.0,187.3 L835.7,189.0 L834.0,190.7 Z" fill="#444"/><path d="M832.8,187.2 L834.5,185.5 L836.2,187.2 L834.5,188.9 Z" fill="#d0604a"/><path d="M838.8,186.8 L840.5,185.1 L842.2,186.8 L840.5,188.5 Z" fill="#2a55b8"/><path d="M838.8,192.5 L840.5,190.8 L842.2,192.5 L840.5,194.2 Z" fill="#d0604a"/><path d="M844.3,180.5 L846.0,178.8 L847.7,180.5 L846.0,182.2 Z" fill="#e0604a"/><path d="M842.8,186.0 L844.5,184.3 L846.2,186.0 L844.5,187.7 Z" fill="#2a55b8"/><path d="M855.3,178.0 L857.0,176.3 L858.7,178.0 L857.0,179.7 Z" fill="#2a55b8"/><path d="M855.3,182.0 L857.0,180.3 L858.7,182.0 L857.0,183.7 Z" fill="#8a8a8a"/><path d="M855.3,187.0 L857.0,185.3 L858.7,187.0 L857.0,188.7 Z" fill="#d0504a"/><path d="M855.3,192.0 L857.0,190.3 L858.7,192.0 L857.0,193.7 Z" fill="#d0504a"/><path d="M855.3,204.7 L857.0,203.0 L858.7,204.7 L857.0,206.4 Z" fill="#1f4f9a"/><path d="M882.3,178.4 L884.0,176.7 L885.7,178.4 L884.0,180.1 Z" fill="#2a55b8"/><path d="M834,189 L846,186 L851,190 M840,193 L848,198" stroke="#d09a70" stroke-width="0.6" stroke-dasharray="1.2,1" fill="none"/></svg>
<svg class="r" style="left:505.5px;top:65.0px;" width="22" height="8" viewBox="0 0 22 8"><rect x="0.4" y="0.4" width="8.6" height="7.2" fill="#e6d4ea" stroke="#a9a0b8" stroke-width="0.7"/><path d="M3.4,0.4 V7.6 M6.2,0.4 V7.6" stroke="#c06a78" stroke-width="0.6"/><rect x="0.4" y="0.4" width="8.6" height="1.6" fill="#b9bcd8"/><rect x="11.5" y="1.2" width="2.6" height="6.4" fill="#2f4fb0"/><rect x="15" y="3" width="2.4" height="4.6" fill="#2f4fb0"/><rect x="18" y="1.2" width="2.8" height="6.4" fill="#d23c3c"/></svg>
<div class="t" style="top:63.0px;font-size:7.2px;color:#1a1a1a;transform:scaleX(0.906);transform-origin:0 50%;left:530.0px;">USDJPY, M1:  US Dollar vs Yen</div>
<div class="t" style="top:63.2px;font-size:7.2px;color:#1a1a1a;transform:scaleX(0.897);transform-origin:100% 50%;right:97.3px;">ExpertMACD</div>
<svg class="r" style="left:973.0px;top:64.0px;" width="10" height="10" viewBox="0 0 10 10"><path d="M2,2 L5,0.6 L6.5,2.5 L3,4 Z" fill="#6a6a6a"/><circle cx="3.6" cy="3.2" r="1.6" fill="#8a8a8a"/><circle cx="5.8" cy="6" r="3.6" fill="#4fae3c" stroke="#2c7c26" stroke-width="0.6"/><path d="M4.8,4.4 L7.6,6 L4.8,7.6 Z" fill="#e8f8e0"/></svg>
<div class="r" style="left:505.0px;top:75.0px;width:29.7px;height:14.6px;background:linear-gradient(180deg,#4a4aec 0%,#3636d8 100%);"></div>
<div class="t" style="top:76.5px;font-size:8.6px;color:#e8ecff;transform:scaleX(0.784);transform-origin:50% 50%;left:419.8px;width:200px;text-align:center;">SELL</div>
<div class="r" style="left:534.7px;top:75.0px;width:68.0px;height:14.5px;background:#eeeeee;border:1px solid #c8c8c8;"></div>
<div class="r" style="left:547.5px;top:76.0px;width:42.5px;height:12.6px;background:#fff;border:1px solid #d0d0d0;"></div>
<svg class="r" style="left:539.5px;top:81.2px;" width="4" height="2.5" viewBox="0 0 4 2.5"><path d="M0,0 L4,0 L2,2.5 Z" fill="#222"/></svg>
<svg class="r" style="left:594.3px;top:81.0px;" width="4" height="2.5" viewBox="0 0 4 2.5"><path d="M0,2.5 L4,2.5 L2,0 Z" fill="#222"/></svg>
<div class="t" style="top:76.3px;font-size:8.2px;color:#444;transform:scaleX(0.940);transform-origin:100% 50%;right:480.5px;">0.01</div>
<div class="r" style="left:602.7px;top:75.0px;width:29.5px;height:14.6px;background:linear-gradient(180deg,#ea4a4a 0%,#d83232 100%);"></div>
<div class="t" style="top:76.5px;font-size:8.6px;color:#ffe6e6;transform:scaleX(0.848);transform-origin:50% 50%;left:517.4px;width:200px;text-align:center;">BUY</div>
<div class="r" style="left:505.0px;top:89.4px;width:63.2px;height:24.8px;background:linear-gradient(180deg,#3434e4 0%,#1c1cc8 55%,#0c0ca8 100%);"></div>
<div class="r" style="left:569.8px;top:89.4px;width:62.4px;height:24.8px;background:linear-gradient(180deg,#e43838 0%,#cc1c1c 55%,#ac0c0c 100%);"></div>
<div class="t" style="top:101.3px;font-size:8.3px;color:#fff;font-weight:bold;transform:scaleX(0.975);transform-origin:0 50%;left:516.5px;">105</div>
<div class="t" style="top:96.8px;font-size:21px;color:#fff;left:532.2px;line-height:20px;height:20px;margin-top:-4px;letter-spacing:-0.3px;">92</div>
<div class="t" style="top:92.4px;font-size:9px;color:#fff;font-weight:bold;left:555.8px;">3</div>
<div class="t" style="top:101.3px;font-size:8.3px;color:#fff;font-weight:bold;transform:scaleX(0.975);transform-origin:0 50%;left:580.8px;">105</div>
<div class="t" style="top:96.8px;font-size:21px;color:#fff;left:596.5px;line-height:20px;height:20px;margin-top:-4px;letter-spacing:-0.3px;">92</div>
<div class="t" style="top:92.4px;font-size:9px;color:#fff;font-weight:bold;left:620.1px;">7</div>
<div class="t" style="top:164.8px;font-size:7px;color:#1a1a1a;transform:scaleX(0.910);transform-origin:0 50%;left:506.0px;">BUY 0.01 at 105.929</div>
<div class="r" style="left:984.8px;top:83.6px;width:2.6px;height:0.9px;background:#333;"></div>
<div class="t" style="top:78.2px;font-size:7.2px;color:#1a1a1a;left:988.0px;">105.970</div>
<div class="r" style="left:984.8px;top:105.9px;width:2.6px;height:0.9px;background:#333;"></div>
<div class="t" style="top:100.5px;font-size:7.2px;color:#1a1a1a;left:988.0px;">105.960</div>
<div class="r" style="left:984.8px;top:128.3px;width:2.6px;height:0.9px;background:#333;"></div>
<div class="t" style="top:122.9px;font-size:7.2px;color:#1a1a1a;left:988.0px;">105.950</div>
<div class="r" style="left:984.8px;top:150.6px;width:2.6px;height:0.9px;background:#333;"></div>
<div class="t" style="top:145.2px;font-size:7.2px;color:#1a1a1a;left:988.0px;">105.940</div>
<div class="r" style="left:984.8px;top:173.0px;width:2.6px;height:0.9px;background:#333;"></div>
<div class="t" style="top:167.6px;font-size:7.2px;color:#1a1a1a;left:988.0px;">105.930</div>
<div class="r" style="left:984.8px;top:195.3px;width:2.6px;height:0.9px;background:#333;"></div>
<div class="t" style="top:189.9px;font-size:7.2px;color:#1a1a1a;left:988.0px;">105.920</div>
<div class="r" style="left:984.8px;top:217.6px;width:2.6px;height:0.9px;background:#333;"></div>
<div class="t" style="top:212.2px;font-size:7.2px;color:#1a1a1a;left:988.0px;">105.910</div>
<div class="r" style="left:984.8px;top:240.0px;width:2.6px;height:0.9px;background:#333;"></div>
<div class="t" style="top:234.6px;font-size:7.2px;color:#1a1a1a;left:988.0px;">105.900</div>
<div class="r" style="left:984.8px;top:262.3px;width:2.6px;height:0.9px;background:#333;"></div>
<div class="t" style="top:256.9px;font-size:7.2px;color:#1a1a1a;left:988.0px;">105.890</div>
<div class="r" style="left:984.8px;top:284.7px;width:2.6px;height:0.9px;background:#333;"></div>
<div class="t" style="top:279.3px;font-size:7.2px;color:#1a1a1a;left:988.0px;">105.880</div>
<div class="r" style="left:984.8px;top:307.0px;width:2.6px;height:0.9px;background:#333;"></div>
<div class="t" style="top:301.6px;font-size:7.2px;color:#1a1a1a;left:988.0px;">105.870</div>
<div class="r" style="left:984.8px;top:329.3px;width:2.6px;height:0.9px;background:#333;"></div>
<div class="t" style="top:323.9px;font-size:7.2px;color:#1a1a1a;left:988.0px;">105.860</div>
<div class="r" style="left:984.8px;top:351.7px;width:2.6px;height:0.9px;background:#333;"></div>
<div class="t" style="top:346.3px;font-size:7.2px;color:#1a1a1a;left:988.0px;">105.850</div>
<div class="r" style="left:984.8px;top:374.0px;width:2.6px;height:0.9px;background:#333;"></div>
<div class="t" style="top:368.6px;font-size:7.2px;color:#1a1a1a;left:988.0px;">105.840</div>
<div class="r" style="left:984.8px;top:396.4px;width:2.6px;height:0.9px;background:#333;"></div>
<div class="t" style="top:391.0px;font-size:7.2px;color:#1a1a1a;left:988.0px;">105.830</div>
<div class="r" style="left:984.8px;top:418.7px;width:2.6px;height:0.9px;background:#333;"></div>
<div class="t" style="top:413.3px;font-size:7.2px;color:#1a1a1a;left:988.0px;">105.820</div>
<div class="r" style="left:985.8px;top:184.2px;width:29.2px;height:8.8px;background:#2a9d90;"></div>
<div class="t" style="top:182.7px;font-size:7.2px;color:#fff;left:988.0px;">105.923</div>
<div class="r" style="left:502.6px;top:440.6px;width:1.0px;height:2.8px;background:#333;"></div>
<div class="t" style="top:441.0px;font-size:7px;color:#1a1a1a;transform:scaleX(0.891);transform-origin:0 50%;left:502.3px;">9 Oct 2020</div>
<div class="r" style="left:546.3px;top:440.6px;width:1.0px;height:2.8px;background:#333;"></div>
<div class="t" style="top:441.0px;font-size:7px;color:#1a1a1a;transform:scaleX(0.898);transform-origin:0 50%;left:546.0px;">9 Oct 08:18</div>
<div class="r" style="left:590.0px;top:440.6px;width:1.0px;height:2.8px;background:#333;"></div>
<div class="t" style="top:441.0px;font-size:7px;color:#1a1a1a;transform:scaleX(0.898);transform-origin:0 50%;left:589.7px;">9 Oct 08:26</div>
<div class="r" style="left:633.7px;top:440.6px;width:1.0px;height:2.8px;background:#333;"></div>
<div class="t" style="top:441.0px;font-size:7px;color:#1a1a1a;transform:scaleX(0.898);transform-origin:0 50%;left:633.4px;">9 Oct 08:34</div>
<div class="r" style="left:677.4px;top:440.6px;width:1.0px;height:2.8px;background:#333;"></div>
<div class="t" style="top:441.0px;font-size:7px;color:#1a1a1a;transform:scaleX(0.898);transform-origin:0 50%;left:677.1px;">9 Oct 08:42</div>
<div class="r" style="left:721.1px;top:440.6px;width:1.0px;height:2.8px;background:#333;"></div>
<div class="t" style="top:441.0px;font-size:7px;color:#1a1a1a;transform:scaleX(0.898);transform-origin:0 50%;left:720.8px;">9 Oct 08:50</div>
<div class="r" style="left:764.8px;top:440.6px;width:1.0px;height:2.8px;background:#333;"></div>
<div class="t" style="top:441.0px;font-size:7px;color:#1a1a1a;transform:scaleX(0.898);transform-origin:0 50%;left:764.5px;">9 Oct 08:58</div>
<div class="r" style="left:808.5px;top:440.6px;width:1.0px;height:2.8px;background:#333;"></div>
<div class="t" style="top:441.0px;font-size:7px;color:#1a1a1a;transform:scaleX(0.898);transform-origin:0 50%;left:808.2px;">9 Oct 09:06</div>
<div class="r" style="left:852.2px;top:440.6px;width:1.0px;height:2.8px;background:#333;"></div>
<div class="t" style="top:441.0px;font-size:7px;color:#1a1a1a;transform:scaleX(0.898);transform-origin:0 50%;left:851.9px;">9 Oct 09:14</div>
<div class="r" style="left:500.3px;top:455.8px;width:521.0px;height:0.9px;background:#a0a0a0;"></div>
<div class="r" style="left:500.3px;top:456.6px;width:521.0px;height:11.9px;background:#f0f0f0;"></div>
<div class="t" style="top:457.1px;font-size:8.2px;color:#8a8a8a;transform:scaleX(0.885);transform-origin:0 50%;left:510.0px;">USDJPY,H1</div>
<div class="t" style="top:457.1px;font-size:8.2px;color:#8a8a8a;transform:scaleX(0.926);transform-origin:0 50%;left:564.0px;">USDCHF,H1</div>
<div class="t" style="top:457.1px;font-size:8.2px;color:#8a8a8a;transform:scaleX(0.865);transform-origin:0 50%;left:623.0px;">GBPUSD,H1</div>
<div class="t" style="top:457.1px;font-size:8.2px;color:#8a8a8a;transform:scaleX(0.874);transform-origin:0 50%;left:681.5px;">USDJPY,H1</div>
<div class="t" style="top:457.1px;font-size:8.2px;color:#8a8a8a;transform:scaleX(0.885);transform-origin:0 50%;left:736.0px;">USDJPY,H1</div>
<div class="t" style="top:457.1px;font-size:8.2px;color:#8a8a8a;transform:scaleX(0.863);transform-origin:0 50%;left:791.5px;">USDARS,H1</div>
<div class="r" style="left:557.0px;top:457.8px;width:0.8px;height:9.2px;background:#8a8a8a;"></div>
<div class="r" style="left:615.0px;top:457.8px;width:0.8px;height:9.2px;background:#8a8a8a;"></div>
<div class="r" style="left:672.0px;top:457.8px;width:0.8px;height:9.2px;background:#8a8a8a;"></div>
<div class="r" style="left:728.0px;top:457.8px;width:0.8px;height:9.2px;background:#8a8a8a;"></div>
<div class="r" style="left:783.5px;top:457.8px;width:0.8px;height:9.2px;background:#8a8a8a;"></div>
<div class="r" style="left:841.3px;top:455.4px;width:58.0px;height:13.0px;background:#fff;border:1px solid #444;border-top:none;border-radius:0 0 1.5px 1.5px;"></div>
<div class="t" style="top:457.0px;font-size:8.2px;color:#1a1a1a;transform:scaleX(0.901);transform-origin:0 50%;left:849.5px;">USDJPY,M1</div>
<svg class="r" style="left:995.0px;top:460.0px;" width="4" height="5" viewBox="0 0 4 5"><path d="M3.2,0.5 L0.8,2.5 L3.2,4.5 Z" fill="#9a9a9a"/></svg>
<svg class="r" style="left:1010.0px;top:460.0px;" width="4" height="5" viewBox="0 0 4 5"><path d="M0.8,0.5 L3.2,2.5 L0.8,4.5 Z" fill="#7a7a7a"/></svg>
<div class="r" style="left:39.7px;top:468.6px;width:981.8px;height:3.6px;background:#f0f0f0;"></div>
<div class="r" style="left:40.5px;top:472.0px;width:10.3px;height:109.0px;background:#f0f0f0;"></div>
<svg class="r" style="left:41.5px;top:473.5px;" width="6" height="6" viewBox="0 0 6 6"><path d="M1,1 L5,5 M5,1 L1,5" stroke="#111" stroke-width="1.3"/></svg>
<div class="r" style="left:41.2px;top:502.5px;width:9.2px;height:78.0px;background:#dfe6f1;border:1px solid #bcc7da;"></div>
<div class="t" style="left:41.1px;top:579.6px;font-size:8.2px;color:#161616;transform-origin:0 0;transform:rotate(-90deg) scaleX(0.885);line-height:9.4px;height:9.4px;">Caixa de Ferramentas</div>
<div class="r" style="left:50.8px;top:472.3px;width:969.0px;height:94.8px;background:#fff;border-top:1px solid #cfcfcf;border-left:1px solid #dcdcdc;"></div>
<div class="t" style="top:475.3px;font-size:8.5px;color:#1a1a1a;transform:scaleX(1.005);transform-origin:0 50%;left:54.3px;">Ativo</div>
<svg class="r" style="left:83.5px;top:479.3px;" width="6" height="4" viewBox="0 0 6 4"><path d="M0.3,3.7 L3,0.5 L5.7,3.7 Z" fill="#444"/></svg>
<div class="t" style="top:475.3px;font-size:8.5px;color:#1a1a1a;transform:scaleX(0.923);transform-origin:0 50%;left:171.0px;">Bilhete</div>
<div class="t" style="top:475.3px;font-size:8.5px;color:#1a1a1a;transform:scaleX(0.969);transform-origin:100% 50%;right:728.5px;">Horário</div>
<div class="t" style="top:475.3px;font-size:8.5px;color:#1a1a1a;transform:scaleX(0.956);transform-origin:100% 50%;right:640.0px;">Tipo</div>
<div class="t" style="top:475.3px;font-size:8.5px;color:#1a1a1a;transform:scaleX(0.952);transform-origin:100% 50%;right:550.5px;">Volume</div>
<div class="t" style="top:475.3px;font-size:8.5px;color:#1a1a1a;transform:scaleX(0.923);transform-origin:100% 50%;right:460.5px;">Preço</div>
<div class="t" style="top:475.3px;font-size:8.5px;color:#1a1a1a;transform:scaleX(0.858);transform-origin:100% 50%;right:370.5px;">S / L</div>
<div class="t" style="top:475.3px;font-size:8.5px;color:#1a1a1a;transform:scaleX(0.843);transform-origin:100% 50%;right:280.5px;">T / P</div>
<div class="t" style="top:475.3px;font-size:8.5px;color:#1a1a1a;transform:scaleX(0.923);transform-origin:100% 50%;right:193.2px;">Preço</div>
<div class="t" style="top:475.3px;font-size:8.5px;color:#1a1a1a;transform:scaleX(0.964);transform-origin:100% 50%;right:53.2px;">Lucro</div>
<div class="r" style="left:166.6px;top:473.5px;width:0.7px;height:29.0px;background:#e6e6e6;"></div>
<div class="r" style="left:247.0px;top:473.5px;width:0.7px;height:29.0px;background:#e6e6e6;"></div>
<div class="r" style="left:342.3px;top:473.5px;width:0.7px;height:29.0px;background:#e6e6e6;"></div>
<div class="r" style="left:431.2px;top:473.5px;width:0.7px;height:29.0px;background:#e6e6e6;"></div>
<div class="r" style="left:520.2px;top:473.5px;width:0.7px;height:29.0px;background:#e6e6e6;"></div>
<div class="r" style="left:610.0px;top:473.5px;width:0.7px;height:29.0px;background:#e6e6e6;"></div>
<div class="r" style="left:699.0px;top:473.5px;width:0.7px;height:29.0px;background:#e6e6e6;"></div>
<div class="r" style="left:788.3px;top:473.5px;width:0.7px;height:29.0px;background:#e6e6e6;"></div>
<div class="r" style="left:878.2px;top:473.5px;width:0.7px;height:29.0px;background:#e6e6e6;"></div>
<svg class="r" style="left:52.0px;top:490.2px;" width="9" height="11" viewBox="0 0 9 11"><path d="M1.8,0.6 H7 Q8.4,0.6 8.4,2 V7 L5.6,10.2 H1.8 Q0.5,10.2 0.5,8.8 V2 Q0.5,0.6 1.8,0.6 Z" fill="#eaf4fd" stroke="#4a98dc" stroke-width="1"/><path d="M2.3,3.5 H6.5 M2.3,5.5 H6.5" stroke="#4a98dc" stroke-width="0.8"/><path d="M5.6,10 L5.6,7.4 L8.2,7.4" fill="#4a98dc"/></svg>
<div class="t" style="top:489.8px;font-size:8.5px;color:#1a1a1a;transform:scaleX(0.936);transform-origin:0 50%;left:66.0px;">usdjpy</div>
<div class="t" style="top:489.8px;font-size:8.5px;color:#1a1a1a;transform:scaleX(0.858);transform-origin:0 50%;left:170.0px;">734101462</div>
<div class="t" style="top:489.8px;font-size:8.5px;color:#1a1a1a;transform:scaleX(0.872);transform-origin:100% 50%;right:726.8px;">2020.10.09 09:20:03</div>
<div class="t" style="top:489.8px;font-size:8.5px;color:#1a1a1a;transform:scaleX(0.912);transform-origin:100% 50%;right:640.0px;">buy</div>
<div class="t" style="top:489.8px;font-size:8.5px;color:#1a1a1a;transform:scaleX(0.937);transform-origin:100% 50%;right:550.7px;">0.01</div>
<div class="t" style="top:489.8px;font-size:8.5px;color:#1a1a1a;transform:scaleX(0.895);transform-origin:100% 50%;right:460.2px;">105.929</div>
<div class="t" style="top:489.8px;font-size:8.5px;color:#1a1a1a;transform:scaleX(0.895);transform-origin:100% 50%;right:382.7px;">105.798</div>
<div class="t" style="top:489.8px;font-size:8.5px;color:#1a1a1a;transform:scaleX(0.895);transform-origin:100% 50%;right:292.7px;">106.032</div>
<div class="t" style="top:489.8px;font-size:8.5px;color:#1a1a1a;transform:scaleX(0.895);transform-origin:100% 50%;right:191.7px;">105.923</div>
<div class="t" style="top:489.8px;font-size:8.5px;color:#d02828;transform:scaleX(0.903);transform-origin:100% 50%;right:63.2px;">-0.06</div>
<svg class="r" style="left:690.8px;top:493.2px;" width="5" height="5" viewBox="0 0 5 5"><path d="M0.7,0.7 L4.3,4.3 M4.3,0.7 L0.7,4.3" stroke="#7c7c7c" stroke-width="1.1"/></svg>
<svg class="r" style="left:780.3px;top:493.2px;" width="5" height="5" viewBox="0 0 5 5"><path d="M0.7,0.7 L4.3,4.3 M4.3,0.7 L0.7,4.3" stroke="#7c7c7c" stroke-width="1.1"/></svg>
<svg class="r" style="left:1009.5px;top:493.2px;" width="5" height="5" viewBox="0 0 5 5"><path d="M0.7,0.7 L4.3,4.3 M4.3,0.7 L0.7,4.3" stroke="#7c7c7c" stroke-width="1.1"/></svg>
<div class="r" style="left:51.5px;top:502.6px;width:968.0px;height:13.6px;background:#cbcbcb;"></div>
<svg class="r" style="left:52.8px;top:505.2px;" width="8" height="8" viewBox="0 0 8 8"><circle cx="4" cy="4" r="3.2" fill="#f4f4f4" stroke="#333" stroke-width="1"/><path d="M2.2,4 H5.8" stroke="#333" stroke-width="1"/></svg>
<div class="t" style="top:503.3px;font-size:8.6px;color:#111;font-weight:bold;transform:scaleX(0.932);transform-origin:0 50%;left:65.2px;">Saldo: 9 999.52 USD  Capital Líquido: 9 999.46  Margem: 10.00  Margem Livre: 9 989.46  Nível de Margem: 99 994.60 %</div>
<div class="t" style="top:503.3px;font-size:8.6px;color:#111;font-weight:bold;transform:scaleX(0.944);transform-origin:100% 50%;right:64.4px;">-0.06</div>
<svg class="r" style="left:1008.5px;top:504.8px;" width="9" height="9" viewBox="0 0 9 9"><rect x="0.5" y="0.5" width="8" height="8" rx="2.5" fill="#e4f6de" stroke="#b4e0aa" stroke-width="0.7"/><path d="M4.5,2 V7 M2,4.5 H7" stroke="#3aae3a" stroke-width="1.3"/></svg>
<div class="r" style="left:50.8px;top:566.6px;width:969.5px;height:1.1px;background:#7d7d7d;"></div>
<div class="r" style="left:50.8px;top:567.6px;width:969.5px;height:13.0px;background:#f0f0f0;"></div>
<div class="r" style="left:52.8px;top:566.4px;width:56.0px;height:13.8px;background:#fff;border:1px solid #444;border-top:none;border-radius:0 0 1.5px 1.5px;"></div>
<div class="t" style="top:567.6px;font-size:8.3px;color:#1a1a1a;transform:scaleX(0.986);transform-origin:0 50%;left:58.6px;">Negociação</div>
<div class="t" style="top:567.6px;font-size:8.3px;color:#8c8c8c;transform:scaleX(0.930);transform-origin:0 50%;left:115.7px;">Exposição</div>
<div class="t" style="top:567.6px;font-size:8.3px;color:#8c8c8c;left:165.3px;">Histórico</div>
<div class="t" style="top:567.6px;font-size:8.3px;color:#8c8c8c;left:211.5px;">Notícias</div>
<div class="t" style="top:567.6px;font-size:8.3px;color:#8c8c8c;transform:scaleX(0.959);transform-origin:0 50%;left:254.6px;">Caixa de E-mail</div>
<div class="t" style="top:567.6px;font-size:8.3px;color:#8c8c8c;transform:scaleX(0.932);transform-origin:0 50%;left:329.6px;">Calendário</div>
<div class="t" style="top:567.6px;font-size:8.3px;color:#8c8c8c;transform:scaleX(0.903);transform-origin:0 50%;left:381.6px;">Empresa</div>
<div class="t" style="top:567.6px;font-size:8.3px;color:#8c8c8c;transform:scaleX(0.945);transform-origin:0 50%;left:426.3px;">Mercado</div>
<div class="t" style="top:567.6px;font-size:8.3px;color:#8c8c8c;transform:scaleX(0.948);transform-origin:0 50%;left:479.8px;">Alertas</div>
<div class="t" style="top:567.6px;font-size:8.3px;color:#8c8c8c;transform:scaleX(0.907);transform-origin:0 50%;left:517.8px;">Sinais</div>
<div class="t" style="top:567.6px;font-size:8.3px;color:#8c8c8c;transform:scaleX(1.014);transform-origin:0 50%;left:551.5px;">Artigos</div>
<div class="t" style="top:567.6px;font-size:8.3px;color:#8c8c8c;transform:scaleX(0.959);transform-origin:0 50%;left:596.5px;">Biblioteca</div>
<div class="t" style="top:567.6px;font-size:8.3px;color:#8c8c8c;transform:scaleX(0.849);transform-origin:0 50%;left:644.9px;">VPS</div>
<div class="t" style="top:567.6px;font-size:8.3px;color:#8c8c8c;transform:scaleX(0.899);transform-origin:0 50%;left:672.4px;">Experts</div>
<div class="t" style="top:567.6px;font-size:8.3px;color:#8c8c8c;transform:scaleX(0.950);transform-origin:0 50%;left:712.3px;">Diário</div>
<div class="r" style="left:158.8px;top:569.0px;width:0.8px;height:9.5px;background:#8c8c8c;"></div>
<div class="r" style="left:205.0px;top:569.0px;width:0.8px;height:9.5px;background:#8c8c8c;"></div>
<div class="r" style="left:248.3px;top:569.0px;width:0.8px;height:9.5px;background:#8c8c8c;"></div>
<div class="r" style="left:322.5px;top:569.0px;width:0.8px;height:9.5px;background:#8c8c8c;"></div>
<div class="r" style="left:374.8px;top:569.0px;width:0.8px;height:9.5px;background:#8c8c8c;"></div>
<div class="r" style="left:419.3px;top:569.0px;width:0.8px;height:9.5px;background:#8c8c8c;"></div>
<div class="r" style="left:473.3px;top:569.0px;width:0.8px;height:9.5px;background:#8c8c8c;"></div>
<div class="r" style="left:511.6px;top:569.0px;width:0.8px;height:9.5px;background:#8c8c8c;"></div>
<div class="r" style="left:545.3px;top:569.0px;width:0.8px;height:9.5px;background:#8c8c8c;"></div>
<div class="r" style="left:589.5px;top:569.0px;width:0.8px;height:9.5px;background:#8c8c8c;"></div>
<div class="r" style="left:638.7px;top:569.0px;width:0.8px;height:9.5px;background:#8c8c8c;"></div>
<div class="r" style="left:665.4px;top:569.0px;width:0.8px;height:9.5px;background:#8c8c8c;"></div>
<div class="r" style="left:705.6px;top:569.0px;width:0.8px;height:9.5px;background:#8c8c8c;"></div>
<div class="t" style="top:569.6px;font-size:5.8px;color:#d02828;font-weight:bold;left:312.3px;">7</div>
<div class="t" style="top:569.6px;font-size:5.8px;color:#d02828;font-weight:bold;left:457.5px;">53</div>
<div class="t" style="top:569.6px;font-size:5.8px;color:#d02828;font-weight:bold;left:579.3px;">1</div>
<div class="r" style="left:920.0px;top:567.8px;width:100.0px;height:12.8px;background:#f4f4f4;"></div>
<div class="t" style="top:567.8px;font-size:8.3px;color:#1a1a1a;transform:scaleX(0.933);transform-origin:0 50%;left:930.5px;">Testador de Estratégia</div>
<div class="r" style="left:39.7px;top:581.0px;width:981.8px;height:2.2px;background:#f0f0f0;"></div>
<div class="r" style="left:39.7px;top:583.2px;width:981.8px;height:0.8px;background:#d6d6d6;"></div>
<div class="r" style="left:39.7px;top:584.0px;width:981.8px;height:16.0px;background:#f0f0f0;"></div>
<div class="t" style="top:587.4px;font-size:8.3px;color:#1a1a1a;transform:scaleX(0.928);transform-origin:0 50%;left:41.2px;">Para Ajuda, pressione F1</div>
<div class="r" style="left:549.6px;top:586.0px;width:0.8px;height:13.0px;background:#cfcfcf;"></div>
<div class="r" style="left:636.5px;top:586.0px;width:0.8px;height:13.0px;background:#cfcfcf;"></div>
<div class="r" style="left:703.2px;top:586.0px;width:0.8px;height:13.0px;background:#cfcfcf;"></div>
<div class="r" style="left:751.3px;top:586.0px;width:0.8px;height:13.0px;background:#cfcfcf;"></div>
<div class="r" style="left:799.0px;top:586.0px;width:0.8px;height:13.0px;background:#cfcfcf;"></div>
<div class="r" style="left:846.5px;top:586.0px;width:0.8px;height:13.0px;background:#cfcfcf;"></div>
<div class="r" style="left:894.0px;top:586.0px;width:0.8px;height:13.0px;background:#cfcfcf;"></div>
<div class="r" style="left:939.7px;top:586.0px;width:0.8px;height:13.0px;background:#cfcfcf;"></div>
<div class="t" style="top:587.4px;font-size:8.3px;color:#1a1a1a;transform:scaleX(0.970);transform-origin:0 50%;left:552.5px;">Default</div>
<svg class="r" style="left:943.0px;top:589.0px;" width="11" height="8" viewBox="0 0 11 8"><path d="M0.3,7.7 L10.3,7.7 L10.3,0.5 Z" fill="#3aa83e"/><path d="M3.4,7.7 V5.6 M5.7,7.7 V4 M8,7.7 V2.4" stroke="#8fd48f" stroke-width="0.4"/></svg>
<div class="t" style="top:587.4px;font-size:8.3px;color:#1a1a1a;transform:scaleX(0.903);transform-origin:0 50%;left:957.0px;">272.30 ms</div>
</div></body></html>
